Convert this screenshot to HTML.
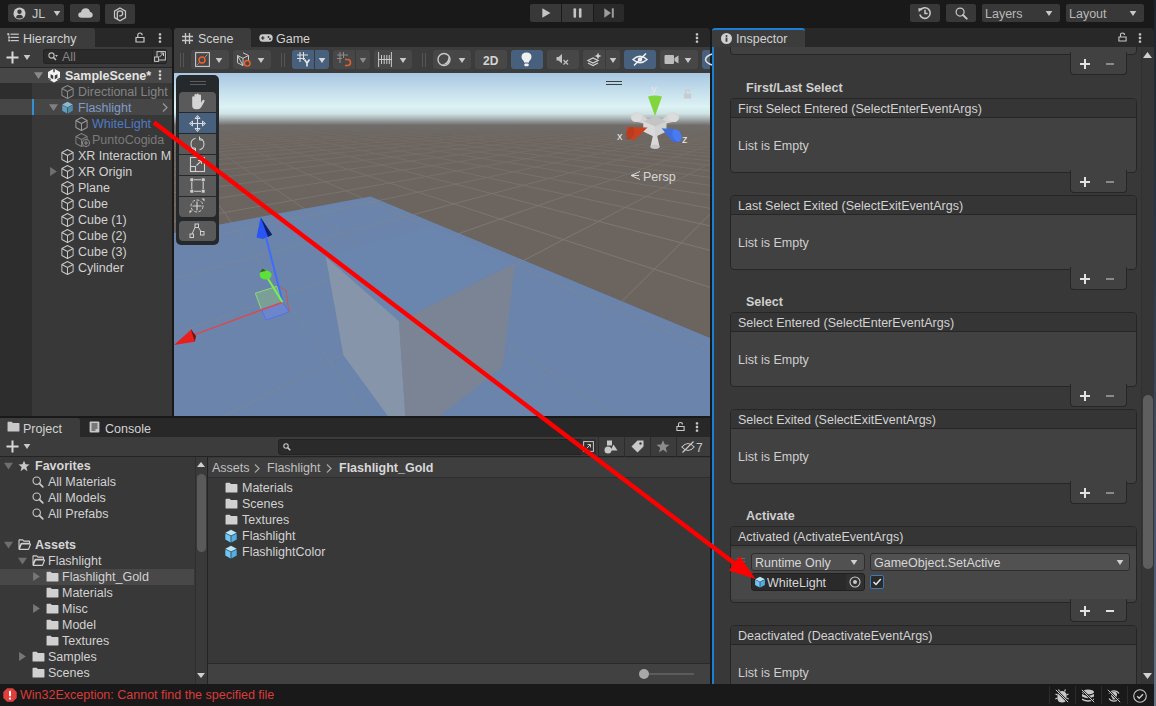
<!DOCTYPE html>
<html><head><meta charset="utf-8">
<style>
*{box-sizing:border-box;margin:0;padding:0}
html,body{width:1156px;height:706px;overflow:hidden;background:#191919;font-family:"Liberation Sans",sans-serif;font-size:12.5px;color:#d2d2d2}
.a{position:absolute}
.t{position:absolute;white-space:nowrap;line-height:18px}
.b{font-weight:bold}
.tb{background:#383838;border-radius:2px}
.tabbar{background:#282828}
.tab{background:#3c3c3c;border-radius:3px 3px 0 0}
.btn{position:absolute;background:#474747;border-radius:3px}
.blue{background:#46607d}
svg{position:absolute;overflow:visible}
</style></head><body>
<svg width="0" height="0" style="position:absolute">
<defs>
<symbol id="cube" viewBox="0.4 0.3 13.2 13.4" preserveAspectRatio="none"><path d="M7 0.8 L12.7 3.7 V10.3 L7 13.2 L1.3 10.3 V3.7 Z M1.3 3.7 L7 6.6 L12.7 3.7 M7 6.6 V13.2" fill="none" stroke="currentColor" stroke-width="1" stroke-linejoin="round"/></symbol>
<symbol id="pcube" viewBox="0 0 14 14"><path d="M7 0.8 L12.7 3.7 L7 6.6 L1.3 3.7 Z" fill="#b5e4fb"/><path d="M1.3 4.4 L6.6 7.1 V13.4 L1.3 10.6 Z" fill="#6ec6f2"/><path d="M12.7 4.4 L7.4 7.1 V13.4 L12.7 10.6 Z" fill="#4fb0e6"/></symbol>
<symbol id="folder" viewBox="0 0 14 12"><path d="M0.5 1.5 Q0.5 0.8 1.2 0.8 H5 L6.3 2.2 H12.8 Q13.5 2.2 13.5 2.9 V10.8 Q13.5 11.5 12.8 11.5 H1.2 Q0.5 11.5 0.5 10.8 Z" fill="currentColor"/></symbol>
<symbol id="ofolder" viewBox="0 0 14 12"><path d="M1 11 V1.5 Q1 1 1.5 1 H5 L6.3 2.3 H12 Q12.5 2.3 12.5 2.8 V4.6 H4 Q3.4 4.6 3.1 5.2 L1 11 Z M1.2 11.3 L3.6 5.5 H13.6 L11.4 11.3 Z" fill="none" stroke="currentColor" stroke-width="1.2" stroke-linejoin="round"/></symbol>
<symbol id="mag" viewBox="0 0 14 14"><circle cx="5.5" cy="5.5" r="4.3" fill="none" stroke="currentColor" stroke-width="1.3"/><path d="M8.6 8.6 L12.6 12.6" stroke="currentColor" stroke-width="2" stroke-linecap="round"/></symbol>
<symbol id="lock" viewBox="0 0 10 11"><path d="M1 5.5 H9 V10 H1 Z" fill="none" stroke="currentColor" stroke-width="1.2"/><path d="M2.8 5.5 V3.3 Q2.8 1 5 1 Q7.2 1 7.2 3.3" fill="none" stroke="currentColor" stroke-width="1.2"/></symbol>
<symbol id="kebab" viewBox="0 0 4 12"><rect x="0.8" y="1.2" width="2.4" height="2.4" rx="0.6" fill="currentColor"/><rect x="0.8" y="4.8" width="2.4" height="2.4" rx="0.6" fill="currentColor"/><rect x="0.8" y="8.4" width="2.4" height="2.4" rx="0.6" fill="currentColor"/></symbol>
<symbol id="tdown" viewBox="0 0 8 6"><path d="M0 0 H8 L4 6 Z" fill="currentColor"/></symbol>
<symbol id="tright" viewBox="0 0 6 8"><path d="M0 0 V8 L6 4 Z" fill="currentColor"/></symbol>
</defs></svg>

<!-- TOP TOOLBAR -->
<div class="a tb" style="left:8px;top:4px;width:56px;height:18px"></div>
<div class="a tb" style="left:70px;top:4px;width:30px;height:18px"></div>
<div class="a tb" style="left:105px;top:4px;width:30px;height:20px"></div>
<div class="a tb" style="left:530px;top:4px;width:31px;height:18px;border-radius:2px 0 0 2px"></div>
<div class="a tb" style="left:562px;top:4px;width:31px;height:18px;border-radius:0"></div>
<div class="a" style="left:594px;top:4px;width:30px;height:18px;background:#2a2a2a;border-radius:0 2px 2px 0"></div>
<div class="a tb" style="left:910px;top:4px;width:30px;height:18px"></div>
<div class="a tb" style="left:946px;top:4px;width:30px;height:18px"></div>
<div class="a tb" style="left:982px;top:4px;width:78px;height:18px"></div>
<div class="t" style="left:985px;top:5px;color:#b8b8b8">Layers</div>
<div class="a tb" style="left:1066px;top:4px;width:78px;height:18px"></div>
<div class="t" style="left:1069px;top:5px;color:#b8b8b8">Layout</div>
<!--TOP-->
<svg style="left:13px;top:7px" width="13" height="13" viewBox="0 0 13 13"><circle cx="6.5" cy="6.5" r="6" fill="#c8c8c8"/><circle cx="6.5" cy="4.8" r="2.2" fill="#383838"/><path d="M2.8 10.2 Q3.5 7.8 6.5 7.8 Q9.5 7.8 10.2 10.2 Q8.8 11.6 6.5 11.6 Q4.2 11.6 2.8 10.2Z" fill="#383838"/></svg>
<div class="t" style="left:32px;top:5px;color:#c8c8c8;font-size:12.5px">JL</div>
<svg style="left:53px;top:11px;color:#c8c8c8" width="8" height="5"><use href="#tdown"/></svg>
<svg style="left:78px;top:8px" width="15" height="10" viewBox="0 0 15 10"><path d="M3.5 9.8 Q0.3 9.8 0.3 7 Q0.3 4.5 3 4.3 Q3.8 0.3 7.8 0.3 Q11.5 0.3 12 4 Q14.7 4.3 14.7 7 Q14.7 9.8 11.8 9.8 Z" fill="#c8c8c8"/></svg>
<svg style="left:113px;top:7px" width="14" height="15" viewBox="0 0 14 15"><path d="M7 1 L12.5 4.2 V10.6 L7 13.8 L1.5 10.6 V4.2 Z" fill="none" stroke="#c8c8c8" stroke-width="1.2"/><path d="M4.3 12.3 V6 Q4.3 3.8 7 3.8 Q9.7 3.8 9.7 6.3 Q9.7 8.8 7 8.8 H6.2" fill="none" stroke="#c8c8c8" stroke-width="1.3"/></svg>
<svg style="left:542px;top:8px" width="9" height="10" viewBox="0 0 9 10"><path d="M0.3 0.3 L8.5 5 L0.3 9.7 Z" fill="#c4c4c4"/></svg>
<svg style="left:573px;top:8px" width="9" height="10" viewBox="0 0 9 10"><rect x="0.5" y="0.2" width="2.6" height="9.6" rx="1.1" fill="#c4c4c4"/><rect x="5.9" y="0.2" width="2.6" height="9.6" rx="1.1" fill="#c4c4c4"/></svg>
<svg style="left:604px;top:8px" width="10" height="10" viewBox="0 0 10 10"><path d="M0.3 0.3 L7 5 L0.3 9.7 Z" fill="#9c9c9c"/><rect x="7.8" y="0.3" width="2" height="9.4" fill="#9c9c9c"/></svg>
<svg style="left:918px;top:6px" width="14" height="14" viewBox="0 0 14 14"><path d="M2.4 4.2 A5.3 5.3 0 1 1 1.8 8.5" fill="none" stroke="#c8c8c8" stroke-width="1.6"/><path d="M0.3 2.2 L4.4 2.2 L0.8 6.2 Z" fill="#c8c8c8"/><path d="M7 3.8 V7.4 H9.6" fill="none" stroke="#c8c8c8" stroke-width="1.5"/></svg>
<svg style="left:955px;top:7px;color:#c8c8c8" width="13" height="13"><use href="#mag"/></svg>
<svg style="left:1045px;top:11px;color:#c8c8c8" width="8" height="5"><use href="#tdown"/></svg>
<svg style="left:1129px;top:11px;color:#c8c8c8" width="8" height="5"><use href="#tdown"/></svg>

<!--/TOP-->

<!-- HIERARCHY -->
<div class="a tabbar" style="left:0;top:28px;width:172px;height:19px;border-radius:0 4px 0 0"></div>
<div class="a tab" style="left:0;top:28px;width:95px;height:19px;border-radius:0 3px 0 0"></div>
<div class="t" style="left:23px;top:30px">Hierarchy</div>
<div class="a" style="left:0;top:47px;width:172px;height:20px;background:#3c3c3c"></div>
<div class="a" style="left:43px;top:49px;width:124px;height:15px;background:#2a2a2a;border-radius:3px"></div>
<div class="a" style="left:0;top:67px;width:172px;height:349px;background:#383838"></div>
<div class="a" style="left:0;top:83px;width:32px;height:333px;background:#2d2d2d"></div>
<div class="a" style="left:0;top:67px;width:172px;height:16px;background:#474747"></div>
<div class="a" style="left:0;top:99px;width:172px;height:16px;background:#464646"></div>
<div class="a" style="left:0;top:67px;width:172px;height:1px;background:#262626"></div>
<div class="a" style="left:0;top:0;width:172px;height:416px;overflow:hidden">
<!--HIER-->
<svg style="left:7px;top:33px" width="12" height="9" viewBox="0 0 12 9"><g fill="#c8c8c8"><rect x="3.5" y="0.6" width="8.3" height="1.2"/><rect x="3.5" y="3.8" width="8.3" height="1.2"/><rect x="3.5" y="7" width="8.3" height="1.2"/><rect x="0.3" y="0.2" width="2" height="2"/><rect x="1.5" y="2.5" width="0.9" height="6"/><rect x="1.5" y="3.8" width="1.5" height="1.2"/><rect x="1.5" y="7" width="1.5" height="1.2"/></g></svg>
<svg style="left:135px;top:32px;color:#c8c8c8" width="10" height="11"><use href="#lock"/></svg>
<svg style="left:158px;top:32px;color:#c8c8c8" width="4" height="12"><use href="#kebab"/></svg>
<svg style="left:6px;top:51px" width="13" height="13" viewBox="0 0 13 13"><path d="M6.5 0.5 V12.5 M0.5 6.5 H12.5" stroke="#d8d8d8" stroke-width="2"/></svg>
<svg style="left:23px;top:55px;color:#c8c8c8" width="8" height="5"><use href="#tdown"/></svg>
<div class="a" style="left:43px;top:49px;width:124px;height:15px;background:#2a2a2a;border:1px solid #232323;border-radius:3px"></div>
<div class="a" style="left:152px;top:49px;width:15px;height:15px;background:#303030;border-radius:0 3px 3px 0;border:1px solid #232323"></div>
<svg style="left:48px;top:52px" width="10" height="9" viewBox="0 0 10 9"><circle cx="3.5" cy="3.5" r="2.6" fill="none" stroke="#bdbdbd" stroke-width="1.1"/><path d="M5.4 5.4 L8 8" stroke="#bdbdbd" stroke-width="1.5"/><path d="M7 3 H10 L8.5 5 Z" fill="#bdbdbd"/></svg>
<div class="t" style="left:62px;top:48px;color:#858585;font-size:12.5px">All</div>
<svg style="left:154px;top:51px" width="12" height="11" viewBox="0 0 12 11"><rect x="3" y="0.6" width="8.4" height="8.4" fill="none" stroke="#c8c8c8" stroke-width="1"/><rect x="0.6" y="6" width="4" height="4.4" fill="#303030" stroke="#c8c8c8" stroke-width="1"/><path d="M5.5 6 L9.5 2 M6.5 2 H9.5 V5" fill="none" stroke="#c8c8c8" stroke-width="1"/></svg>

<svg style="left:34px;top:72px;color:#8a8a8a" width="9" height="7"><use href="#tdown"/></svg>
<svg style="left:47px;top:68px" width="14" height="15" viewBox="0 0 14 15"><path d="M7 0.5 L13 4 V11 L7 14.5 L1 11 V4 Z" fill="#f2f2f2"/><path d="M3.6 6.2 L6.2 7.6 V11.2 L3.6 9.8Z M10.4 6.2 L7.8 7.6 V11.2 L10.4 9.8Z" fill="#3a3a3a"/><path d="M6.3 0.3 H7.7 V4 L7 4.4 L6.3 4Z" fill="#3a3a3a"/><path d="M0.8 10.2 L3 11.4 L3.6 11 M13.2 10.2 L11 11.4 L10.4 11" stroke="#3a3a3a" stroke-width="1.1" fill="none"/></svg>
<div class="t b" style="left:65px;top:67px;color:#e4e4e4">SampleScene*</div>
<svg style="left:158px;top:69px;color:#d0d0d0" width="4" height="12"><use href="#kebab"/></svg>

<svg style="left:61px;top:85px;color:#8a8a8a" width="13" height="14"><use href="#cube"/></svg>
<div class="t" style="left:78px;top:83px;color:#848484">Directional Light</div>

<div class="a" style="left:32px;top:99px;width:2px;height:16px;background:#2f91d6"></div>
<svg style="left:49px;top:104px;color:#808080" width="9" height="7"><use href="#tdown"/></svg>
<svg style="left:61px;top:101px" width="13" height="13" viewBox="0 0 14 14"><path d="M7 0.8 L12.7 3.7 L7 6.6 L1.3 3.7 Z" fill="#8bb9d2"/><path d="M1.3 4.4 L6.6 7.1 V13.4 L1.3 10.6 Z" fill="#5f9dbd"/><path d="M12.7 4.4 L7.4 7.1 V13.4 L12.7 10.6 Z" fill="#4e8bab"/></svg>
<div class="t" style="left:78px;top:99px;color:#7f9cc6">Flashlight</div>
<svg style="left:162px;top:103px" width="6" height="9" viewBox="0 0 6 9"><path d="M1 0.5 L5 4.5 L1 8.5" fill="none" stroke="#9a9a9a" stroke-width="1.2"/></svg>

<svg style="left:75px;top:117px;color:#9a9a9a" width="13" height="14"><use href="#cube"/></svg>
<div class="t" style="left:92px;top:115px;color:#4f7bc4">WhiteLight</div>

<svg style="left:75px;top:133px;color:#7e7e7e" width="13" height="14"><use href="#cube"/></svg>
<svg style="left:82px;top:139px" width="8" height="8" viewBox="0 0 8 8"><circle cx="4" cy="4" r="3.6" fill="#383838" stroke="#8a8a8a" stroke-width="1"/><path d="M4 1.8 V6.2 M1.8 4 H6.2" stroke="#8a8a8a" stroke-width="1.2"/></svg>
<div class="t" style="left:92px;top:131px;color:#7a7a7a">PuntoCogida</div>

<svg style="left:61px;top:149px;color:#c8c8c8" width="13" height="14"><use href="#cube"/></svg>
<div class="t" style="left:78px;top:147px;color:#d2d2d2">XR Interaction M</div>

<svg style="left:50px;top:167px;color:#707070" width="7" height="9"><use href="#tright"/></svg>
<svg style="left:61px;top:165px;color:#c8c8c8" width="13" height="14"><use href="#cube"/></svg>
<div class="t" style="left:78px;top:163px;color:#d2d2d2">XR Origin</div>

<svg style="left:61px;top:181px;color:#c8c8c8" width="13" height="14"><use href="#cube"/></svg>
<div class="t" style="left:78px;top:179px;color:#d2d2d2">Plane</div>
<svg style="left:61px;top:197px;color:#c8c8c8" width="13" height="14"><use href="#cube"/></svg>
<div class="t" style="left:78px;top:195px;color:#d2d2d2">Cube</div>
<svg style="left:61px;top:213px;color:#c8c8c8" width="13" height="14"><use href="#cube"/></svg>
<div class="t" style="left:78px;top:211px;color:#d2d2d2">Cube (1)</div>
<svg style="left:61px;top:229px;color:#c8c8c8" width="13" height="14"><use href="#cube"/></svg>
<div class="t" style="left:78px;top:227px;color:#d2d2d2">Cube (2)</div>
<svg style="left:61px;top:245px;color:#c8c8c8" width="13" height="14"><use href="#cube"/></svg>
<div class="t" style="left:78px;top:243px;color:#d2d2d2">Cube (3)</div>
<svg style="left:61px;top:261px;color:#c8c8c8" width="13" height="14"><use href="#cube"/></svg>
<div class="t" style="left:78px;top:259px;color:#d2d2d2">Cylinder</div>

<!--/HIER-->
</div>

<!-- SCENE -->
<div class="a tabbar" style="left:174px;top:28px;width:536px;height:19px;border-radius:4px 4px 0 0"></div>
<div class="a tab" style="left:174px;top:28px;width:77px;height:19px"></div>
<div class="t" style="left:198px;top:30px">Scene</div>
<div class="t" style="left:276px;top:30px">Game</div>
<div class="a" style="left:174px;top:47px;width:536px;height:26px;background:#3c3c3c"></div>
<!--STB-->
<svg style="left:182px;top:33px" width="11" height="11" viewBox="0 0 11 11"><path d="M3.5 0 V11 M7.5 0 V11 M0 3.5 H11 M0 7.5 H11" stroke="#c8c8c8" stroke-width="1.3"/></svg>
<svg style="left:259px;top:34px" width="14" height="8" viewBox="0 0 14 8"><path d="M3.5 0.3 H10.5 Q13.7 0.3 13.7 4 Q13.7 7.7 10.5 7.7 H3.5 Q0.3 7.7 0.3 4 Q0.3 0.3 3.5 0.3Z" fill="#c8c8c8"/><path d="M3.8 2.3 V5.7 M2.1 4 H5.5" stroke="#282828" stroke-width="1.2"/><circle cx="9.5" cy="3" r="0.9" fill="#282828"/><circle cx="11" cy="5" r="0.9" fill="#282828"/></svg>
<svg style="left:695px;top:32px;color:#c8c8c8" width="4" height="12"><use href="#kebab"/></svg>
<div class="a" style="left:180px;top:53px;width:1px;height:14px;background:#555"></div>
<div class="a" style="left:183px;top:53px;width:1px;height:14px;background:#555"></div>
<div class="btn" style="left:191px;top:50px;width:38px;height:19px"></div>
<svg style="left:195px;top:52px" width="15" height="15" viewBox="0 0 15 15"><rect x="0.6" y="0.6" width="13.8" height="13.8" fill="none" stroke="#c8c8c8" stroke-width="1.1"/><path d="M2.5 12.5 L12.5 2.5" stroke="#c8c8c8" stroke-width="0.9" stroke-dasharray="1.5 1"/><circle cx="7" cy="8" r="3" fill="#474747" stroke="#f0602a" stroke-width="1.4"/></svg>
<svg style="left:215px;top:58px;color:#c8c8c8" width="8" height="5"><use href="#tdown"/></svg>
<div class="btn" style="left:233px;top:50px;width:38px;height:19px"></div>
<svg style="left:236px;top:52px" width="15" height="15" viewBox="0 0 15 15"><path d="M7 0.8 L12.5 3.5 V9 M7 13.5 L1.5 10.8 V3.5 Z M1.5 3.5 L7 6.3 L12.5 3.5 M7 6.3 V13.5" fill="none" stroke="#c8c8c8" stroke-width="1"/><circle cx="11.3" cy="11.3" r="2.8" fill="#474747" stroke="#f0602a" stroke-width="1.4"/></svg>
<svg style="left:257px;top:58px;color:#c8c8c8" width="8" height="5"><use href="#tdown"/></svg>
<div class="a" style="left:281px;top:53px;width:1px;height:14px;background:#555"></div>
<div class="a" style="left:284px;top:53px;width:1px;height:14px;background:#555"></div>
<div class="btn blue" style="left:292px;top:50px;width:37px;height:19px"></div>
<div class="a" style="left:314px;top:50px;width:1px;height:19px;background:#3a3a3a"></div>
<svg style="left:297px;top:52px" width="14" height="15" viewBox="0 0 14 15"><path d="M3 0 V10 M6.5 0 V8 M0 3 H11 M0 6.5 H8" stroke="#e0e0e0" stroke-width="1.1"/><path d="M7.5 7.5 L10 11 L12.5 7.5 M10 11 V14.5" fill="none" stroke="#e8e8e8" stroke-width="1.6"/></svg>
<svg style="left:318px;top:58px;color:#d8d8d8" width="8" height="5"><use href="#tdown"/></svg>
<div class="btn" style="left:333px;top:50px;width:37px;height:19px"></div>
<div class="a" style="left:355px;top:50px;width:1px;height:19px;background:#3a3a3a"></div>
<svg style="left:337px;top:52px" width="15" height="15" viewBox="0 0 15 15"><path d="M3 0 V11 M6.5 0 V6 M0 3 H11 M0 6.5 H5" stroke="#8c8c8c" stroke-width="1.1"/><path d="M8 7.5 H10.5 Q13.5 7.5 13.5 10.5 Q13.5 13.5 10.5 13.5 H8" fill="none" stroke="#e06030" stroke-width="1.6"/></svg>
<svg style="left:359px;top:58px;color:#8a8a8a" width="8" height="5"><use href="#tdown"/></svg>
<div class="btn" style="left:374px;top:50px;width:38px;height:19px"></div>
<svg style="left:378px;top:52px" width="14" height="15" viewBox="0 0 14 15"><path d="M0.6 0 V15 M13.4 0 V15 M3.5 3 V12 M6.2 3 V12 M8.8 3 V12 M11.3 3 V12 M0 7.5 H14" stroke="#c8c8c8" stroke-width="1"/></svg>
<svg style="left:399px;top:58px;color:#c8c8c8" width="8" height="5"><use href="#tdown"/></svg>
<div class="a" style="left:422px;top:53px;width:1px;height:14px;background:#555"></div>
<div class="a" style="left:425px;top:53px;width:1px;height:14px;background:#555"></div>
<div class="btn" style="left:433px;top:50px;width:38px;height:19px"></div>
<svg style="left:437px;top:52px" width="15" height="15" viewBox="0 0 15 15"><circle cx="7" cy="7.5" r="6" fill="none" stroke="#c8c8c8" stroke-width="1.4"/><path d="M4.5 12.5 Q11 12 11.5 4.5 Q13.5 8 11.5 11 Q9 13.5 4.5 12.5Z" fill="#c8c8c8"/></svg>
<svg style="left:458px;top:58px;color:#c8c8c8" width="8" height="5"><use href="#tdown"/></svg>
<div class="btn" style="left:475px;top:50px;width:32px;height:19px"></div>
<div class="t b" style="left:483px;top:52px;color:#d4d4d4;font-size:12px">2D</div>
<div class="btn blue" style="left:511px;top:50px;width:32px;height:19px"></div>
<svg style="left:521px;top:52px" width="11" height="15" viewBox="0 0 11 15"><path d="M5.5 0.5 Q10.5 0.5 10.5 5 Q10.5 7.5 8 9.5 V10.5 H3 V9.5 Q0.5 7.5 0.5 5 Q0.5 0.5 5.5 0.5Z" fill="#f0f0f0"/><rect x="3.3" y="11.5" width="4.4" height="2.8" rx="1" fill="#f0f0f0"/></svg>
<div class="btn" style="left:547px;top:50px;width:32px;height:19px"></div>
<svg style="left:556px;top:53px" width="14" height="13" viewBox="0 0 14 13"><path d="M0.5 4 H2.5 L6 1 V10.5 L2.5 7.5 H0.5Z" fill="#c0c0c0"/><path d="M7.5 7 L12 11.5 M12 7 L7.5 11.5" stroke="#c0c0c0" stroke-width="1.3"/></svg>
<div class="btn" style="left:583px;top:50px;width:37px;height:19px"></div>
<div class="a" style="left:605px;top:50px;width:1px;height:19px;background:#3a3a3a"></div>
<svg style="left:587px;top:52px" width="15" height="15" viewBox="0 0 15 15"><path d="M1 8.5 L6 6 L11 8.5 L6 11Z M1 11 L6 13.5 L11 11" fill="none" stroke="#d0d0d0" stroke-width="1.3"/><path d="M11 0.5 L12 3 L14.5 4 L12 5 L11 7.5 L10 5 L7.5 4 L10 3Z" fill="#d0d0d0"/></svg>
<svg style="left:609px;top:58px;color:#c8c8c8" width="8" height="5"><use href="#tdown"/></svg>
<div class="btn blue" style="left:624px;top:50px;width:32px;height:19px"></div>
<svg style="left:632px;top:53px" width="16" height="13" viewBox="0 0 16 13"><path d="M1 6.5 Q8 0 15 6.5 Q8 13 1 6.5Z" fill="none" stroke="#f0f0f0" stroke-width="1.5"/><circle cx="8" cy="6.5" r="2.2" fill="#f0f0f0"/><path d="M2 12.5 L14 0.5" stroke="#f0f0f0" stroke-width="1.6"/></svg>
<div class="btn" style="left:660px;top:50px;width:38px;height:19px"></div>
<svg style="left:664px;top:54px" width="15" height="11" viewBox="0 0 15 11"><rect x="0.5" y="1" width="9.5" height="9" rx="1" fill="#bdbdbd"/><path d="M10.5 4 L14.5 1.5 V9.5 L10.5 7Z" fill="#bdbdbd"/></svg>
<svg style="left:684px;top:58px;color:#c8c8c8" width="8" height="5"><use href="#tdown"/></svg>
<div class="btn blue" style="left:702px;top:50px;width:8px;height:19px;border-radius:3px 0 0 3px"></div>
<svg style="left:704px;top:53px" width="8" height="13" viewBox="0 0 8 13"><path d="M8 1 Q2 3 1.5 6.5 Q2 10 8 12" fill="none" stroke="#e0e0e0" stroke-width="1.6"/></svg>

<!--/STB-->
<svg style="left:174px;top:73px;overflow:hidden" width="536" height="343" viewBox="174 73 536 343">
<defs>
<linearGradient id="sky" x1="0" y1="73" x2="0" y2="135" gradientUnits="userSpaceOnUse">
<stop offset="0" stop-color="#a8c7e2"/><stop offset="0.54" stop-color="#dcf2f4"/><stop offset="0.653" stop-color="#d0e4e6"/><stop offset="0.734" stop-color="#aab5b7"/><stop offset="0.79" stop-color="#8c9090"/><stop offset="0.847" stop-color="#6d6a68"/><stop offset="1" stop-color="#6b645f"/>
</linearGradient>
<linearGradient id="gf" x1="0" y1="118" x2="0" y2="230" gradientUnits="userSpaceOnUse"><stop offset="0" stop-color="#000"/><stop offset="0.2" stop-color="#555"/><stop offset="1" stop-color="#fff"/></linearGradient>
<mask id="gm" maskUnits="userSpaceOnUse" x="174" y="73" width="537" height="343"><rect x="174" y="73" width="537" height="343" fill="url(#gf)"/></mask>
<clipPath id="pc"><polygon points="370.7,196.4 711,338.5 711,416 174,416 174,233"/></clipPath>
</defs>
<rect x="174" y="73" width="537" height="343" fill="url(#sky)"/>
<g stroke="#8b8681" stroke-width="1" mask="url(#gm)" fill="none" opacity="0.6">
<!--GRID-->
<line x1="-2594.4" y1="154.8" x2="463.0" y2="111.5"/>
<line x1="-2834.8" y1="159.2" x2="465.6" y2="111.6"/>
<line x1="-3121.3" y1="164.5" x2="468.4" y2="111.6"/>
<line x1="-3468.7" y1="170.9" x2="471.1" y2="111.7"/>
<line x1="-3898.7" y1="178.9" x2="473.9" y2="111.8"/>
<line x1="-4444.8" y1="188.9" x2="476.8" y2="111.8"/>
<line x1="-5161.2" y1="202.2" x2="479.7" y2="111.9"/>
<line x1="-6142.6" y1="220.3" x2="482.7" y2="112.0"/>
<line x1="-7568.9" y1="246.6" x2="485.7" y2="112.1"/>
<line x1="-9831.6" y1="288.4" x2="488.8" y2="112.1"/>
<line x1="-13972.0" y1="364.8" x2="491.9" y2="112.2"/>
<line x1="-23983.7" y1="549.7" x2="495.1" y2="112.3"/>
<line x1="-82792.4" y1="1635.4" x2="498.3" y2="112.3"/>
<line x1="-295107.3" y1="5646.4" x2="501.6" y2="112.4"/>
<line x1="-289203.1" y1="5667.0" x2="505.0" y2="112.5"/>
<line x1="-283299.0" y1="5687.5" x2="508.4" y2="112.6"/>
<line x1="-277394.8" y1="5708.0" x2="511.9" y2="112.7"/>
<line x1="-271490.7" y1="5728.6" x2="515.5" y2="112.7"/>
<line x1="-265586.5" y1="5749.1" x2="519.1" y2="112.8"/>
<line x1="-259682.4" y1="5769.6" x2="522.8" y2="112.9"/>
<line x1="-253778.2" y1="5790.2" x2="526.6" y2="113.0"/>
<line x1="-247874.1" y1="5810.7" x2="530.5" y2="113.1"/>
<line x1="-241969.9" y1="5831.2" x2="534.4" y2="113.2"/>
<line x1="-236065.7" y1="5851.7" x2="538.5" y2="113.3"/>
<line x1="-230161.6" y1="5872.3" x2="542.6" y2="113.4"/>
<line x1="-224257.4" y1="5892.8" x2="546.8" y2="113.5"/>
<line x1="-218353.3" y1="5913.3" x2="551.1" y2="113.6"/>
<line x1="-212449.1" y1="5933.9" x2="555.5" y2="113.7"/>
<line x1="-206545.0" y1="5954.4" x2="559.9" y2="113.8"/>
<line x1="-200640.8" y1="5974.9" x2="564.5" y2="113.9"/>
<line x1="-194736.7" y1="5995.5" x2="569.2" y2="114.0"/>
<line x1="-188832.5" y1="6016.0" x2="574.0" y2="114.1"/>
<line x1="-182928.3" y1="6036.5" x2="578.9" y2="114.2"/>
<line x1="-177024.2" y1="6057.0" x2="583.9" y2="114.4"/>
<line x1="-171120.0" y1="6077.6" x2="589.0" y2="114.5"/>
<line x1="-165215.9" y1="6098.1" x2="594.3" y2="114.6"/>
<line x1="-159311.7" y1="6118.6" x2="599.7" y2="114.7"/>
<line x1="-153407.6" y1="6139.2" x2="605.2" y2="114.8"/>
<line x1="-147503.4" y1="6159.7" x2="610.8" y2="115.0"/>
<line x1="-141599.3" y1="6180.2" x2="616.6" y2="115.1"/>
<line x1="-135695.1" y1="6200.8" x2="622.6" y2="115.3"/>
<line x1="-129791.0" y1="6221.3" x2="628.6" y2="115.4"/>
<line x1="-123886.8" y1="6241.8" x2="634.9" y2="115.5"/>
<line x1="-117982.6" y1="6262.3" x2="641.3" y2="115.7"/>
<line x1="-112078.5" y1="6282.9" x2="647.9" y2="115.8"/>
<line x1="-106174.3" y1="6303.4" x2="654.6" y2="116.0"/>
<line x1="-100270.2" y1="6323.9" x2="661.6" y2="116.2"/>
<line x1="-94366.0" y1="6344.5" x2="668.7" y2="116.3"/>
<line x1="-88461.9" y1="6365.0" x2="676.1" y2="116.5"/>
<line x1="-82557.7" y1="6385.5" x2="683.6" y2="116.7"/>
<line x1="-76653.6" y1="6406.1" x2="691.4" y2="116.9"/>
<line x1="-70749.4" y1="6426.6" x2="699.4" y2="117.1"/>
<line x1="-64845.2" y1="6447.1" x2="707.6" y2="117.2"/>
<line x1="-58941.1" y1="6467.6" x2="716.1" y2="117.4"/>
<line x1="-53036.9" y1="6488.2" x2="724.8" y2="117.6"/>
<line x1="-47132.8" y1="6508.7" x2="733.9" y2="117.9"/>
<line x1="-41228.6" y1="6529.2" x2="743.2" y2="118.1"/>
<line x1="-35324.5" y1="6549.8" x2="752.8" y2="118.3"/>
<line x1="-29420.3" y1="6570.3" x2="762.7" y2="118.5"/>
<line x1="-23516.2" y1="6590.8" x2="773.0" y2="118.8"/>
<line x1="-17612.0" y1="6611.4" x2="783.6" y2="119.0"/>
<line x1="-11707.8" y1="6631.9" x2="794.5" y2="119.3"/>
<line x1="-5803.7" y1="6652.4" x2="805.9" y2="119.5"/>
<line x1="100.5" y1="6672.9" x2="817.6" y2="119.8"/>
<line x1="6004.6" y1="6693.5" x2="829.8" y2="120.1"/>
<line x1="11908.8" y1="6714.0" x2="842.5" y2="120.4"/>
<line x1="17812.9" y1="6734.5" x2="855.6" y2="120.7"/>
<line x1="23717.1" y1="6755.1" x2="869.2" y2="121.0"/>
<line x1="29621.2" y1="6775.6" x2="883.3" y2="121.4"/>
<line x1="35525.4" y1="6796.1" x2="898.1" y2="121.7"/>
<line x1="41429.6" y1="6816.7" x2="913.4" y2="122.1"/>
<line x1="47333.7" y1="6837.2" x2="929.3" y2="122.4"/>
<line x1="53237.9" y1="6857.7" x2="946.0" y2="122.8"/>
<line x1="59142.0" y1="6878.2" x2="963.3" y2="123.2"/>
<line x1="65046.2" y1="6898.8" x2="981.5" y2="123.7"/>
<line x1="70950.3" y1="6919.3" x2="1000.4" y2="124.1"/>
<line x1="76854.5" y1="6939.8" x2="1020.3" y2="124.6"/>
<line x1="82758.6" y1="6960.4" x2="1041.1" y2="125.1"/>
<line x1="88662.8" y1="6980.9" x2="1062.9" y2="125.6"/>
<line x1="94567.0" y1="7001.4" x2="1085.8" y2="126.1"/>
<line x1="100471.1" y1="7022.0" x2="1109.9" y2="126.7"/>
<line x1="106375.3" y1="7042.5" x2="1135.2" y2="127.3"/>
<line x1="112279.4" y1="7063.0" x2="1161.9" y2="127.9"/>
<line x1="118183.6" y1="7083.5" x2="1190.1" y2="128.5"/>
<line x1="124087.7" y1="7104.1" x2="1219.9" y2="129.2"/>
<line x1="129991.9" y1="7124.6" x2="1251.5" y2="130.0"/>
<line x1="135896.0" y1="7145.1" x2="1285.0" y2="130.8"/>
<line x1="141800.2" y1="7165.7" x2="1320.6" y2="131.6"/>
<line x1="147704.4" y1="7186.2" x2="1358.4" y2="132.5"/>
<line x1="153608.5" y1="7206.7" x2="1398.8" y2="133.4"/>
<line x1="159512.7" y1="7227.3" x2="1442.0" y2="134.4"/>
<line x1="165416.8" y1="7247.8" x2="1488.3" y2="135.5"/>
<line x1="171321.0" y1="7268.3" x2="1538.1" y2="136.7"/>
<line x1="177225.1" y1="7288.8" x2="1591.6" y2="137.9"/>
<line x1="183129.3" y1="7309.4" x2="1649.5" y2="139.3"/>
<line x1="189033.4" y1="7329.9" x2="1712.1" y2="140.8"/>
<line x1="194937.6" y1="7350.4" x2="1780.3" y2="142.4"/>
<line x1="200841.8" y1="7371.0" x2="1854.6" y2="144.1"/>
<line x1="206745.9" y1="7391.5" x2="1936.0" y2="146.0"/>
<line x1="212650.1" y1="7412.0" x2="2025.6" y2="148.1"/>
<line x1="218554.2" y1="7432.6" x2="2124.7" y2="150.4"/>
<line x1="224458.4" y1="7453.1" x2="2234.8" y2="153.0"/>
<line x1="230362.5" y1="7473.6" x2="2357.8" y2="155.9"/>
<line x1="236266.7" y1="7494.1" x2="2496.3" y2="159.1"/>
<line x1="242170.8" y1="7514.7" x2="2653.4" y2="162.8"/>
<line x1="248075.0" y1="7535.2" x2="2832.9" y2="167.0"/>
<line x1="253979.1" y1="7555.7" x2="3040.1" y2="171.8"/>
<line x1="259883.3" y1="7576.3" x2="3282.0" y2="177.5"/>
<line x1="265787.5" y1="7596.8" x2="3568.0" y2="184.2"/>
<line x1="271691.6" y1="7617.3" x2="3911.5" y2="192.2"/>
<line x1="277595.8" y1="7637.9" x2="4331.7" y2="202.1"/>
<line x1="283499.9" y1="7658.4" x2="4857.5" y2="214.4"/>
<line x1="289404.1" y1="7678.9" x2="5534.5" y2="230.2"/>
<line x1="295308.2" y1="7699.4" x2="6438.8" y2="251.4"/>
<line x1="301212.4" y1="7720.0" x2="7707.9" y2="281.1"/>
<line x1="307116.5" y1="7740.5" x2="9618.6" y2="325.8"/>
<line x1="313020.7" y1="7761.0" x2="12821.7" y2="400.8"/>
<line x1="318924.9" y1="7781.6" x2="19298.8" y2="552.3"/>
<line x1="324829.0" y1="7802.1" x2="39316.3" y2="1020.8"/>
<line x1="-2594.4" y1="154.8" x2="-299259.9" y2="5632.0"/>
<line x1="-2366.5" y1="151.6" x2="-294017.6" y2="5650.2"/>
<line x1="-2167.1" y1="148.7" x2="-288775.4" y2="5668.5"/>
<line x1="-1991.2" y1="146.2" x2="-283533.2" y2="5686.7"/>
<line x1="-1834.9" y1="144.0" x2="-278291.0" y2="5704.9"/>
<line x1="-1695.1" y1="142.1" x2="-273048.8" y2="5723.2"/>
<line x1="-1569.2" y1="140.3" x2="-267806.6" y2="5741.4"/>
<line x1="-1455.4" y1="138.7" x2="-262564.3" y2="5759.6"/>
<line x1="-1351.9" y1="137.2" x2="-257322.1" y2="5777.8"/>
<line x1="-1257.4" y1="135.9" x2="-252079.9" y2="5796.1"/>
<line x1="-1170.8" y1="134.6" x2="-246837.7" y2="5814.3"/>
<line x1="-1091.1" y1="133.5" x2="-241595.5" y2="5832.5"/>
<line x1="-1017.6" y1="132.5" x2="-236353.2" y2="5850.7"/>
<line x1="-949.5" y1="131.5" x2="-231111.0" y2="5869.0"/>
<line x1="-886.3" y1="130.6" x2="-225868.8" y2="5887.2"/>
<line x1="-827.4" y1="129.8" x2="-220626.6" y2="5905.4"/>
<line x1="-772.5" y1="129.0" x2="-215384.4" y2="5923.7"/>
<line x1="-721.1" y1="128.3" x2="-210142.1" y2="5941.9"/>
<line x1="-673.0" y1="127.6" x2="-204899.9" y2="5960.1"/>
<line x1="-627.7" y1="127.0" x2="-199657.7" y2="5978.3"/>
<line x1="-585.1" y1="126.4" x2="-194415.5" y2="5996.6"/>
<line x1="-545.0" y1="125.8" x2="-189173.3" y2="6014.8"/>
<line x1="-507.1" y1="125.2" x2="-183931.1" y2="6033.0"/>
<line x1="-471.2" y1="124.7" x2="-178688.8" y2="6051.3"/>
<line x1="-437.2" y1="124.3" x2="-173446.6" y2="6069.5"/>
<line x1="-405.0" y1="123.8" x2="-168204.4" y2="6087.7"/>
<line x1="-374.4" y1="123.4" x2="-162962.2" y2="6105.9"/>
<line x1="-345.3" y1="123.0" x2="-157720.0" y2="6124.2"/>
<line x1="-317.5" y1="122.6" x2="-152477.7" y2="6142.4"/>
<line x1="-291.1" y1="122.2" x2="-147235.5" y2="6160.6"/>
<line x1="-265.8" y1="121.8" x2="-141993.3" y2="6178.9"/>
<line x1="-241.7" y1="121.5" x2="-136751.1" y2="6197.1"/>
<line x1="-218.6" y1="121.2" x2="-131508.9" y2="6215.3"/>
<line x1="-196.5" y1="120.9" x2="-126266.6" y2="6233.5"/>
<line x1="-175.4" y1="120.6" x2="-121024.4" y2="6251.8"/>
<line x1="-155.1" y1="120.3" x2="-115782.2" y2="6270.0"/>
<line x1="-135.6" y1="120.0" x2="-110540.0" y2="6288.2"/>
<line x1="-116.9" y1="119.7" x2="-105297.8" y2="6306.5"/>
<line x1="-98.8" y1="119.5" x2="-100055.5" y2="6324.7"/>
<line x1="-81.5" y1="119.2" x2="-94813.3" y2="6342.9"/>
<line x1="-64.8" y1="119.0" x2="-89571.1" y2="6361.1"/>
<line x1="-48.8" y1="118.8" x2="-84328.9" y2="6379.4"/>
<line x1="-33.3" y1="118.5" x2="-79086.7" y2="6397.6"/>
<line x1="-18.3" y1="118.3" x2="-73844.5" y2="6415.8"/>
<line x1="-3.9" y1="118.1" x2="-68602.2" y2="6434.1"/>
<line x1="10.1" y1="117.9" x2="-63360.0" y2="6452.3"/>
<line x1="23.6" y1="117.7" x2="-58117.8" y2="6470.5"/>
<line x1="36.6" y1="117.6" x2="-52875.6" y2="6488.7"/>
<line x1="49.3" y1="117.4" x2="-47633.4" y2="6507.0"/>
<line x1="61.5" y1="117.2" x2="-42391.1" y2="6525.2"/>
<line x1="73.3" y1="117.0" x2="-37148.9" y2="6543.4"/>
<line x1="84.8" y1="116.9" x2="-31906.7" y2="6561.7"/>
<line x1="95.9" y1="116.7" x2="-26664.5" y2="6579.9"/>
<line x1="106.7" y1="116.6" x2="-21422.3" y2="6598.1"/>
<line x1="117.2" y1="116.4" x2="-16180.0" y2="6616.3"/>
<line x1="127.4" y1="116.3" x2="-10937.8" y2="6634.6"/>
<line x1="137.3" y1="116.1" x2="-5695.6" y2="6652.8"/>
<line x1="146.9" y1="116.0" x2="-453.4" y2="6671.0"/>
<line x1="156.2" y1="115.9" x2="4788.8" y2="6689.3"/>
<line x1="165.3" y1="115.7" x2="10031.1" y2="6707.5"/>
<line x1="174.1" y1="115.6" x2="15273.3" y2="6725.7"/>
<line x1="182.7" y1="115.5" x2="20515.5" y2="6743.9"/>
<line x1="191.1" y1="115.4" x2="25757.7" y2="6762.2"/>
<line x1="199.3" y1="115.3" x2="30999.9" y2="6780.4"/>
<line x1="207.2" y1="115.1" x2="36242.1" y2="6798.6"/>
<line x1="215.0" y1="115.0" x2="41484.4" y2="6816.8"/>
<line x1="222.5" y1="114.9" x2="46726.6" y2="6835.1"/>
<line x1="229.9" y1="114.8" x2="51968.8" y2="6853.3"/>
<line x1="237.1" y1="114.7" x2="57211.0" y2="6871.5"/>
<line x1="244.1" y1="114.6" x2="62453.2" y2="6889.8"/>
<line x1="250.9" y1="114.5" x2="67695.5" y2="6908.0"/>
<line x1="257.6" y1="114.4" x2="72937.7" y2="6926.2"/>
<line x1="264.2" y1="114.3" x2="78179.9" y2="6944.4"/>
<line x1="270.5" y1="114.2" x2="83422.1" y2="6962.7"/>
<line x1="276.8" y1="114.2" x2="88664.3" y2="6980.9"/>
<line x1="282.9" y1="114.1" x2="93906.6" y2="6999.1"/>
<line x1="288.8" y1="114.0" x2="99148.8" y2="7017.4"/>
<line x1="294.7" y1="113.9" x2="104391.0" y2="7035.6"/>
<line x1="300.4" y1="113.8" x2="109633.2" y2="7053.8"/>
<line x1="305.9" y1="113.7" x2="114875.4" y2="7072.0"/>
<line x1="311.4" y1="113.7" x2="120117.6" y2="7090.3"/>
<line x1="316.7" y1="113.6" x2="125359.9" y2="7108.5"/>
<line x1="322.0" y1="113.5" x2="130602.1" y2="7126.7"/>
<line x1="327.1" y1="113.4" x2="135844.3" y2="7145.0"/>
<line x1="332.1" y1="113.4" x2="141086.5" y2="7163.2"/>
<line x1="337.0" y1="113.3" x2="146328.7" y2="7181.4"/>
<line x1="341.9" y1="113.2" x2="151571.0" y2="7199.6"/>
<line x1="346.6" y1="113.2" x2="156813.2" y2="7217.9"/>
<line x1="351.2" y1="113.1" x2="162055.4" y2="7236.1"/>
<line x1="355.8" y1="113.0" x2="167297.6" y2="7254.3"/>
<line x1="360.2" y1="113.0" x2="172539.8" y2="7272.6"/>
<line x1="364.6" y1="112.9" x2="177782.1" y2="7290.8"/>
<line x1="368.9" y1="112.9" x2="183024.3" y2="7309.0"/>
<line x1="373.1" y1="112.8" x2="188266.5" y2="7327.2"/>
<line x1="377.2" y1="112.7" x2="193508.7" y2="7345.5"/>
<line x1="381.3" y1="112.7" x2="198750.9" y2="7363.7"/>
<line x1="385.3" y1="112.6" x2="203993.2" y2="7381.9"/>
<line x1="389.2" y1="112.6" x2="209235.4" y2="7400.2"/>
<line x1="393.0" y1="112.5" x2="214477.6" y2="7418.4"/>
<line x1="396.8" y1="112.5" x2="219719.8" y2="7436.6"/>
<line x1="400.5" y1="112.4" x2="224962.0" y2="7454.8"/>
<line x1="404.1" y1="112.4" x2="230204.2" y2="7473.1"/>
<line x1="407.7" y1="112.3" x2="235446.5" y2="7491.3"/>
<line x1="411.2" y1="112.3" x2="240688.7" y2="7509.5"/>
<line x1="414.7" y1="112.2" x2="245930.9" y2="7527.8"/>
<line x1="418.1" y1="112.2" x2="251173.1" y2="7546.0"/>
<line x1="421.4" y1="112.1" x2="256415.3" y2="7564.2"/>
<line x1="424.7" y1="112.1" x2="261657.6" y2="7582.4"/>
<line x1="427.9" y1="112.0" x2="266899.8" y2="7600.7"/>
<line x1="431.1" y1="112.0" x2="272142.0" y2="7618.9"/>
<line x1="434.2" y1="111.9" x2="277384.2" y2="7637.1"/>
<line x1="437.3" y1="111.9" x2="282626.4" y2="7655.4"/>
<line x1="440.4" y1="111.8" x2="287868.7" y2="7673.6"/>
<line x1="443.3" y1="111.8" x2="293110.9" y2="7691.8"/>
<line x1="446.3" y1="111.8" x2="298353.1" y2="7710.0"/>
<line x1="449.2" y1="111.7" x2="303595.3" y2="7728.3"/>
<line x1="452.0" y1="111.7" x2="308837.5" y2="7746.5"/>
<line x1="454.8" y1="111.6" x2="314079.7" y2="7764.7"/>
<line x1="457.6" y1="111.6" x2="319322.0" y2="7782.9"/>
<line x1="460.3" y1="111.6" x2="324564.2" y2="7801.2"/>
<line x1="463.0" y1="111.5" x2="329806.4" y2="7819.4"/>
<!--/GRID-->
</g>
<polygon points="370.7,196.4 711,338.5 711,416 174,416 174,233" fill="#6a84ac"/>
<!--SCENEOBJ-->
<g clip-path="url(#pc)" stroke="#7d8796" stroke-width="1" fill="none" opacity="0.8">
<line x1="-2594.4" y1="154.8" x2="463.0" y2="111.5"/>
<line x1="-2834.8" y1="159.2" x2="465.6" y2="111.6"/>
<line x1="-3121.3" y1="164.5" x2="468.4" y2="111.6"/>
<line x1="-3468.7" y1="170.9" x2="471.1" y2="111.7"/>
<line x1="-3898.7" y1="178.9" x2="473.9" y2="111.8"/>
<line x1="-4444.8" y1="188.9" x2="476.8" y2="111.8"/>
<line x1="-5161.2" y1="202.2" x2="479.7" y2="111.9"/>
<line x1="-6142.6" y1="220.3" x2="482.7" y2="112.0"/>
<line x1="-7568.9" y1="246.6" x2="485.7" y2="112.1"/>
<line x1="-9831.6" y1="288.4" x2="488.8" y2="112.1"/>
<line x1="-13972.0" y1="364.8" x2="491.9" y2="112.2"/>
<line x1="-23983.7" y1="549.7" x2="495.1" y2="112.3"/>
<line x1="-82792.4" y1="1635.4" x2="498.3" y2="112.3"/>
<line x1="-295107.3" y1="5646.4" x2="501.6" y2="112.4"/>
<line x1="-289203.1" y1="5667.0" x2="505.0" y2="112.5"/>
<line x1="-283299.0" y1="5687.5" x2="508.4" y2="112.6"/>
<line x1="-277394.8" y1="5708.0" x2="511.9" y2="112.7"/>
<line x1="-271490.7" y1="5728.6" x2="515.5" y2="112.7"/>
<line x1="-265586.5" y1="5749.1" x2="519.1" y2="112.8"/>
<line x1="-259682.4" y1="5769.6" x2="522.8" y2="112.9"/>
<line x1="-253778.2" y1="5790.2" x2="526.6" y2="113.0"/>
<line x1="-247874.1" y1="5810.7" x2="530.5" y2="113.1"/>
<line x1="-241969.9" y1="5831.2" x2="534.4" y2="113.2"/>
<line x1="-236065.7" y1="5851.7" x2="538.5" y2="113.3"/>
<line x1="-230161.6" y1="5872.3" x2="542.6" y2="113.4"/>
<line x1="-224257.4" y1="5892.8" x2="546.8" y2="113.5"/>
<line x1="-218353.3" y1="5913.3" x2="551.1" y2="113.6"/>
<line x1="-212449.1" y1="5933.9" x2="555.5" y2="113.7"/>
<line x1="-206545.0" y1="5954.4" x2="559.9" y2="113.8"/>
<line x1="-200640.8" y1="5974.9" x2="564.5" y2="113.9"/>
<line x1="-194736.7" y1="5995.5" x2="569.2" y2="114.0"/>
<line x1="-188832.5" y1="6016.0" x2="574.0" y2="114.1"/>
<line x1="-182928.3" y1="6036.5" x2="578.9" y2="114.2"/>
<line x1="-177024.2" y1="6057.0" x2="583.9" y2="114.4"/>
<line x1="-171120.0" y1="6077.6" x2="589.0" y2="114.5"/>
<line x1="-165215.9" y1="6098.1" x2="594.3" y2="114.6"/>
<line x1="-159311.7" y1="6118.6" x2="599.7" y2="114.7"/>
<line x1="-153407.6" y1="6139.2" x2="605.2" y2="114.8"/>
<line x1="-147503.4" y1="6159.7" x2="610.8" y2="115.0"/>
<line x1="-141599.3" y1="6180.2" x2="616.6" y2="115.1"/>
<line x1="-135695.1" y1="6200.8" x2="622.6" y2="115.3"/>
<line x1="-129791.0" y1="6221.3" x2="628.6" y2="115.4"/>
<line x1="-123886.8" y1="6241.8" x2="634.9" y2="115.5"/>
<line x1="-117982.6" y1="6262.3" x2="641.3" y2="115.7"/>
<line x1="-112078.5" y1="6282.9" x2="647.9" y2="115.8"/>
<line x1="-106174.3" y1="6303.4" x2="654.6" y2="116.0"/>
<line x1="-100270.2" y1="6323.9" x2="661.6" y2="116.2"/>
<line x1="-94366.0" y1="6344.5" x2="668.7" y2="116.3"/>
<line x1="-88461.9" y1="6365.0" x2="676.1" y2="116.5"/>
<line x1="-82557.7" y1="6385.5" x2="683.6" y2="116.7"/>
<line x1="-76653.6" y1="6406.1" x2="691.4" y2="116.9"/>
<line x1="-70749.4" y1="6426.6" x2="699.4" y2="117.1"/>
<line x1="-64845.2" y1="6447.1" x2="707.6" y2="117.2"/>
<line x1="-58941.1" y1="6467.6" x2="716.1" y2="117.4"/>
<line x1="-53036.9" y1="6488.2" x2="724.8" y2="117.6"/>
<line x1="-47132.8" y1="6508.7" x2="733.9" y2="117.9"/>
<line x1="-41228.6" y1="6529.2" x2="743.2" y2="118.1"/>
<line x1="-35324.5" y1="6549.8" x2="752.8" y2="118.3"/>
<line x1="-29420.3" y1="6570.3" x2="762.7" y2="118.5"/>
<line x1="-23516.2" y1="6590.8" x2="773.0" y2="118.8"/>
<line x1="-17612.0" y1="6611.4" x2="783.6" y2="119.0"/>
<line x1="-11707.8" y1="6631.9" x2="794.5" y2="119.3"/>
<line x1="-5803.7" y1="6652.4" x2="805.9" y2="119.5"/>
<line x1="100.5" y1="6672.9" x2="817.6" y2="119.8"/>
<line x1="6004.6" y1="6693.5" x2="829.8" y2="120.1"/>
<line x1="11908.8" y1="6714.0" x2="842.5" y2="120.4"/>
<line x1="17812.9" y1="6734.5" x2="855.6" y2="120.7"/>
<line x1="23717.1" y1="6755.1" x2="869.2" y2="121.0"/>
<line x1="29621.2" y1="6775.6" x2="883.3" y2="121.4"/>
<line x1="35525.4" y1="6796.1" x2="898.1" y2="121.7"/>
<line x1="41429.6" y1="6816.7" x2="913.4" y2="122.1"/>
<line x1="47333.7" y1="6837.2" x2="929.3" y2="122.4"/>
<line x1="53237.9" y1="6857.7" x2="946.0" y2="122.8"/>
<line x1="59142.0" y1="6878.2" x2="963.3" y2="123.2"/>
<line x1="65046.2" y1="6898.8" x2="981.5" y2="123.7"/>
<line x1="70950.3" y1="6919.3" x2="1000.4" y2="124.1"/>
<line x1="76854.5" y1="6939.8" x2="1020.3" y2="124.6"/>
<line x1="82758.6" y1="6960.4" x2="1041.1" y2="125.1"/>
<line x1="88662.8" y1="6980.9" x2="1062.9" y2="125.6"/>
<line x1="94567.0" y1="7001.4" x2="1085.8" y2="126.1"/>
<line x1="100471.1" y1="7022.0" x2="1109.9" y2="126.7"/>
<line x1="106375.3" y1="7042.5" x2="1135.2" y2="127.3"/>
<line x1="112279.4" y1="7063.0" x2="1161.9" y2="127.9"/>
<line x1="118183.6" y1="7083.5" x2="1190.1" y2="128.5"/>
<line x1="124087.7" y1="7104.1" x2="1219.9" y2="129.2"/>
<line x1="129991.9" y1="7124.6" x2="1251.5" y2="130.0"/>
<line x1="135896.0" y1="7145.1" x2="1285.0" y2="130.8"/>
<line x1="141800.2" y1="7165.7" x2="1320.6" y2="131.6"/>
<line x1="147704.4" y1="7186.2" x2="1358.4" y2="132.5"/>
<line x1="153608.5" y1="7206.7" x2="1398.8" y2="133.4"/>
<line x1="159512.7" y1="7227.3" x2="1442.0" y2="134.4"/>
<line x1="165416.8" y1="7247.8" x2="1488.3" y2="135.5"/>
<line x1="171321.0" y1="7268.3" x2="1538.1" y2="136.7"/>
<line x1="177225.1" y1="7288.8" x2="1591.6" y2="137.9"/>
<line x1="183129.3" y1="7309.4" x2="1649.5" y2="139.3"/>
<line x1="189033.4" y1="7329.9" x2="1712.1" y2="140.8"/>
<line x1="194937.6" y1="7350.4" x2="1780.3" y2="142.4"/>
<line x1="200841.8" y1="7371.0" x2="1854.6" y2="144.1"/>
<line x1="206745.9" y1="7391.5" x2="1936.0" y2="146.0"/>
<line x1="212650.1" y1="7412.0" x2="2025.6" y2="148.1"/>
<line x1="218554.2" y1="7432.6" x2="2124.7" y2="150.4"/>
<line x1="224458.4" y1="7453.1" x2="2234.8" y2="153.0"/>
<line x1="230362.5" y1="7473.6" x2="2357.8" y2="155.9"/>
<line x1="236266.7" y1="7494.1" x2="2496.3" y2="159.1"/>
<line x1="242170.8" y1="7514.7" x2="2653.4" y2="162.8"/>
<line x1="248075.0" y1="7535.2" x2="2832.9" y2="167.0"/>
<line x1="253979.1" y1="7555.7" x2="3040.1" y2="171.8"/>
<line x1="259883.3" y1="7576.3" x2="3282.0" y2="177.5"/>
<line x1="265787.5" y1="7596.8" x2="3568.0" y2="184.2"/>
<line x1="271691.6" y1="7617.3" x2="3911.5" y2="192.2"/>
<line x1="277595.8" y1="7637.9" x2="4331.7" y2="202.1"/>
<line x1="283499.9" y1="7658.4" x2="4857.5" y2="214.4"/>
<line x1="289404.1" y1="7678.9" x2="5534.5" y2="230.2"/>
<line x1="295308.2" y1="7699.4" x2="6438.8" y2="251.4"/>
<line x1="301212.4" y1="7720.0" x2="7707.9" y2="281.1"/>
<line x1="307116.5" y1="7740.5" x2="9618.6" y2="325.8"/>
<line x1="313020.7" y1="7761.0" x2="12821.7" y2="400.8"/>
<line x1="318924.9" y1="7781.6" x2="19298.8" y2="552.3"/>
<line x1="324829.0" y1="7802.1" x2="39316.3" y2="1020.8"/>
<line x1="-2594.4" y1="154.8" x2="-299259.9" y2="5632.0"/>
<line x1="-2366.5" y1="151.6" x2="-294017.6" y2="5650.2"/>
<line x1="-2167.1" y1="148.7" x2="-288775.4" y2="5668.5"/>
<line x1="-1991.2" y1="146.2" x2="-283533.2" y2="5686.7"/>
<line x1="-1834.9" y1="144.0" x2="-278291.0" y2="5704.9"/>
<line x1="-1695.1" y1="142.1" x2="-273048.8" y2="5723.2"/>
<line x1="-1569.2" y1="140.3" x2="-267806.6" y2="5741.4"/>
<line x1="-1455.4" y1="138.7" x2="-262564.3" y2="5759.6"/>
<line x1="-1351.9" y1="137.2" x2="-257322.1" y2="5777.8"/>
<line x1="-1257.4" y1="135.9" x2="-252079.9" y2="5796.1"/>
<line x1="-1170.8" y1="134.6" x2="-246837.7" y2="5814.3"/>
<line x1="-1091.1" y1="133.5" x2="-241595.5" y2="5832.5"/>
<line x1="-1017.6" y1="132.5" x2="-236353.2" y2="5850.7"/>
<line x1="-949.5" y1="131.5" x2="-231111.0" y2="5869.0"/>
<line x1="-886.3" y1="130.6" x2="-225868.8" y2="5887.2"/>
<line x1="-827.4" y1="129.8" x2="-220626.6" y2="5905.4"/>
<line x1="-772.5" y1="129.0" x2="-215384.4" y2="5923.7"/>
<line x1="-721.1" y1="128.3" x2="-210142.1" y2="5941.9"/>
<line x1="-673.0" y1="127.6" x2="-204899.9" y2="5960.1"/>
<line x1="-627.7" y1="127.0" x2="-199657.7" y2="5978.3"/>
<line x1="-585.1" y1="126.4" x2="-194415.5" y2="5996.6"/>
<line x1="-545.0" y1="125.8" x2="-189173.3" y2="6014.8"/>
<line x1="-507.1" y1="125.2" x2="-183931.1" y2="6033.0"/>
<line x1="-471.2" y1="124.7" x2="-178688.8" y2="6051.3"/>
<line x1="-437.2" y1="124.3" x2="-173446.6" y2="6069.5"/>
<line x1="-405.0" y1="123.8" x2="-168204.4" y2="6087.7"/>
<line x1="-374.4" y1="123.4" x2="-162962.2" y2="6105.9"/>
<line x1="-345.3" y1="123.0" x2="-157720.0" y2="6124.2"/>
<line x1="-317.5" y1="122.6" x2="-152477.7" y2="6142.4"/>
<line x1="-291.1" y1="122.2" x2="-147235.5" y2="6160.6"/>
<line x1="-265.8" y1="121.8" x2="-141993.3" y2="6178.9"/>
<line x1="-241.7" y1="121.5" x2="-136751.1" y2="6197.1"/>
<line x1="-218.6" y1="121.2" x2="-131508.9" y2="6215.3"/>
<line x1="-196.5" y1="120.9" x2="-126266.6" y2="6233.5"/>
<line x1="-175.4" y1="120.6" x2="-121024.4" y2="6251.8"/>
<line x1="-155.1" y1="120.3" x2="-115782.2" y2="6270.0"/>
<line x1="-135.6" y1="120.0" x2="-110540.0" y2="6288.2"/>
<line x1="-116.9" y1="119.7" x2="-105297.8" y2="6306.5"/>
<line x1="-98.8" y1="119.5" x2="-100055.5" y2="6324.7"/>
<line x1="-81.5" y1="119.2" x2="-94813.3" y2="6342.9"/>
<line x1="-64.8" y1="119.0" x2="-89571.1" y2="6361.1"/>
<line x1="-48.8" y1="118.8" x2="-84328.9" y2="6379.4"/>
<line x1="-33.3" y1="118.5" x2="-79086.7" y2="6397.6"/>
<line x1="-18.3" y1="118.3" x2="-73844.5" y2="6415.8"/>
<line x1="-3.9" y1="118.1" x2="-68602.2" y2="6434.1"/>
<line x1="10.1" y1="117.9" x2="-63360.0" y2="6452.3"/>
<line x1="23.6" y1="117.7" x2="-58117.8" y2="6470.5"/>
<line x1="36.6" y1="117.6" x2="-52875.6" y2="6488.7"/>
<line x1="49.3" y1="117.4" x2="-47633.4" y2="6507.0"/>
<line x1="61.5" y1="117.2" x2="-42391.1" y2="6525.2"/>
<line x1="73.3" y1="117.0" x2="-37148.9" y2="6543.4"/>
<line x1="84.8" y1="116.9" x2="-31906.7" y2="6561.7"/>
<line x1="95.9" y1="116.7" x2="-26664.5" y2="6579.9"/>
<line x1="106.7" y1="116.6" x2="-21422.3" y2="6598.1"/>
<line x1="117.2" y1="116.4" x2="-16180.0" y2="6616.3"/>
<line x1="127.4" y1="116.3" x2="-10937.8" y2="6634.6"/>
<line x1="137.3" y1="116.1" x2="-5695.6" y2="6652.8"/>
<line x1="146.9" y1="116.0" x2="-453.4" y2="6671.0"/>
<line x1="156.2" y1="115.9" x2="4788.8" y2="6689.3"/>
<line x1="165.3" y1="115.7" x2="10031.1" y2="6707.5"/>
<line x1="174.1" y1="115.6" x2="15273.3" y2="6725.7"/>
<line x1="182.7" y1="115.5" x2="20515.5" y2="6743.9"/>
<line x1="191.1" y1="115.4" x2="25757.7" y2="6762.2"/>
<line x1="199.3" y1="115.3" x2="30999.9" y2="6780.4"/>
<line x1="207.2" y1="115.1" x2="36242.1" y2="6798.6"/>
<line x1="215.0" y1="115.0" x2="41484.4" y2="6816.8"/>
<line x1="222.5" y1="114.9" x2="46726.6" y2="6835.1"/>
<line x1="229.9" y1="114.8" x2="51968.8" y2="6853.3"/>
<line x1="237.1" y1="114.7" x2="57211.0" y2="6871.5"/>
<line x1="244.1" y1="114.6" x2="62453.2" y2="6889.8"/>
<line x1="250.9" y1="114.5" x2="67695.5" y2="6908.0"/>
<line x1="257.6" y1="114.4" x2="72937.7" y2="6926.2"/>
<line x1="264.2" y1="114.3" x2="78179.9" y2="6944.4"/>
<line x1="270.5" y1="114.2" x2="83422.1" y2="6962.7"/>
<line x1="276.8" y1="114.2" x2="88664.3" y2="6980.9"/>
<line x1="282.9" y1="114.1" x2="93906.6" y2="6999.1"/>
<line x1="288.8" y1="114.0" x2="99148.8" y2="7017.4"/>
<line x1="294.7" y1="113.9" x2="104391.0" y2="7035.6"/>
<line x1="300.4" y1="113.8" x2="109633.2" y2="7053.8"/>
<line x1="305.9" y1="113.7" x2="114875.4" y2="7072.0"/>
<line x1="311.4" y1="113.7" x2="120117.6" y2="7090.3"/>
<line x1="316.7" y1="113.6" x2="125359.9" y2="7108.5"/>
<line x1="322.0" y1="113.5" x2="130602.1" y2="7126.7"/>
<line x1="327.1" y1="113.4" x2="135844.3" y2="7145.0"/>
<line x1="332.1" y1="113.4" x2="141086.5" y2="7163.2"/>
<line x1="337.0" y1="113.3" x2="146328.7" y2="7181.4"/>
<line x1="341.9" y1="113.2" x2="151571.0" y2="7199.6"/>
<line x1="346.6" y1="113.2" x2="156813.2" y2="7217.9"/>
<line x1="351.2" y1="113.1" x2="162055.4" y2="7236.1"/>
<line x1="355.8" y1="113.0" x2="167297.6" y2="7254.3"/>
<line x1="360.2" y1="113.0" x2="172539.8" y2="7272.6"/>
<line x1="364.6" y1="112.9" x2="177782.1" y2="7290.8"/>
<line x1="368.9" y1="112.9" x2="183024.3" y2="7309.0"/>
<line x1="373.1" y1="112.8" x2="188266.5" y2="7327.2"/>
<line x1="377.2" y1="112.7" x2="193508.7" y2="7345.5"/>
<line x1="381.3" y1="112.7" x2="198750.9" y2="7363.7"/>
<line x1="385.3" y1="112.6" x2="203993.2" y2="7381.9"/>
<line x1="389.2" y1="112.6" x2="209235.4" y2="7400.2"/>
<line x1="393.0" y1="112.5" x2="214477.6" y2="7418.4"/>
<line x1="396.8" y1="112.5" x2="219719.8" y2="7436.6"/>
<line x1="400.5" y1="112.4" x2="224962.0" y2="7454.8"/>
<line x1="404.1" y1="112.4" x2="230204.2" y2="7473.1"/>
<line x1="407.7" y1="112.3" x2="235446.5" y2="7491.3"/>
<line x1="411.2" y1="112.3" x2="240688.7" y2="7509.5"/>
<line x1="414.7" y1="112.2" x2="245930.9" y2="7527.8"/>
<line x1="418.1" y1="112.2" x2="251173.1" y2="7546.0"/>
<line x1="421.4" y1="112.1" x2="256415.3" y2="7564.2"/>
<line x1="424.7" y1="112.1" x2="261657.6" y2="7582.4"/>
<line x1="427.9" y1="112.0" x2="266899.8" y2="7600.7"/>
<line x1="431.1" y1="112.0" x2="272142.0" y2="7618.9"/>
<line x1="434.2" y1="111.9" x2="277384.2" y2="7637.1"/>
<line x1="437.3" y1="111.9" x2="282626.4" y2="7655.4"/>
<line x1="440.4" y1="111.8" x2="287868.7" y2="7673.6"/>
<line x1="443.3" y1="111.8" x2="293110.9" y2="7691.8"/>
<line x1="446.3" y1="111.8" x2="298353.1" y2="7710.0"/>
<line x1="449.2" y1="111.7" x2="303595.3" y2="7728.3"/>
<line x1="452.0" y1="111.7" x2="308837.5" y2="7746.5"/>
<line x1="454.8" y1="111.6" x2="314079.7" y2="7764.7"/>
<line x1="457.6" y1="111.6" x2="319322.0" y2="7782.9"/>
<line x1="460.3" y1="111.6" x2="324564.2" y2="7801.2"/>
<line x1="463.0" y1="111.5" x2="329806.4" y2="7819.4"/>
</g>
<polygon points="325.8,257 399,321.3 515,262.9 427.9,225.3" fill="#6a85ae"/>
<polygon points="325.8,257 399,321.3 405.3,416 387.8,416 343.4,355.1" fill="#8f9aaa" opacity="0.8"/>
<polygon points="399,321.3 515,262.9 503,366 440,416 405.3,416" fill="#7e8590" opacity="0.8"/>
<polygon points="255.3,293.2 277,286.3 282.6,302.2 261.2,309.1" fill="#86b08a" fill-opacity="0.6" stroke="#8cf060" stroke-width="0.8"/>
<polygon points="261.2,309.1 282.6,302.2 289,312 266.2,320" fill="#6f86e0" fill-opacity="0.6" stroke="#4a6cff" stroke-width="0.8"/>
<polyline points="277,286.3 286,290 289,312" fill="none" stroke="#e04848" stroke-width="0.8"/>
<line x1="282.6" y1="302.2" x2="193.8" y2="334.9" stroke="#e04848" stroke-width="1.5"/>
<polygon points="174,345 191.8,328.9 194.8,341.8" fill="#e8201c"/>
<polygon points="191,329.5 194.8,341.8 196,336" fill="#701010"/>
<line x1="282.6" y1="302.2" x2="266.2" y2="237.7" stroke="#3f6cff" stroke-width="2"/>
<polygon points="260.6,217.5 256.5,237.5 263,239 272.1,234.8" fill="#2a55f5"/>
<polygon points="260.6,217.5 268,237 272.1,234.8" fill="#10206a"/>
<line x1="282.6" y1="302.2" x2="265.2" y2="274.4" stroke="#78f048" stroke-width="2"/>
<ellipse cx="265.6" cy="275" rx="6" ry="4.5" fill="#5ee03a"/>
<polygon points="262.6,268.5 260,272 266,271" fill="#2a6a10"/>

<!--/SCENEOBJ-->
</svg>
<!--OVL-->
<div class="a" style="left:176px;top:75px;width:43px;height:170px;background:#25292c;border-radius:5px"></div>
<div class="a" style="left:190px;top:81px;width:16px;height:1px;background:#5a5d60"></div>
<div class="a" style="left:190px;top:84px;width:16px;height:1px;background:#5a5d60"></div>
<div class="a" style="left:179px;top:92px;width:37px;height:20px;background:#5a5a5a;border-radius:4px 4px 0 0"></div>
<div class="a" style="left:179px;top:113px;width:37px;height:20px;background:#46607d"></div>
<div class="a" style="left:179px;top:134px;width:37px;height:20px;background:#5a5a5a"></div>
<div class="a" style="left:179px;top:155px;width:37px;height:20px;background:#5a5a5a"></div>
<div class="a" style="left:179px;top:176px;width:37px;height:20px;background:#5a5a5a"></div>
<div class="a" style="left:179px;top:197px;width:37px;height:20px;background:#5a5a5a;border-radius:0 0 4px 4px"></div>
<div class="a" style="left:179px;top:221px;width:37px;height:20px;background:#5a5a5a;border-radius:4px"></div>
<svg style="left:189px;top:93px" width="17" height="17" viewBox="0 0 17 17"><path d="M3.2 9.5 V4.5 Q3.2 3.3 4.3 3.3 Q5.4 3.3 5.4 4.5 V8 V2.2 Q5.4 1 6.5 1 Q7.6 1 7.6 2.2 V8 V1.6 Q7.6 0.4 8.7 0.4 Q9.8 0.4 9.8 1.6 V8 V2.6 Q9.8 1.4 10.9 1.4 Q12 1.4 12 2.6 V9.8 L13.3 7.6 Q14.2 6.4 15.2 7.1 Q15.9 7.7 15.3 8.8 L12.2 14.2 Q11 16.3 8.6 16.3 H7 Q3.2 16.3 3.2 12.5Z" fill="#d4d4d4"/></svg>
<svg style="left:189px;top:115px" width="17" height="17" viewBox="0 0 17 17"><path d="M8.5 1.5 V15.5 M1.5 8.5 H15.5" stroke="#dcdcdc" stroke-width="1.1"/><path d="M8.5 0.5 L6 3.5 H11Z M8.5 16.5 L6 13.5 H11Z M0.5 8.5 L3.5 6 V11Z M16.5 8.5 L13.5 6 V11Z" fill="none" stroke="#dcdcdc" stroke-width="1"/></svg>
<svg style="left:190px;top:136px" width="15" height="16" viewBox="0 0 15 16"><path d="M5.5 2.2 A6 6 0 0 0 5.5 13.8" fill="none" stroke="#cfcfcf" stroke-width="1.1"/><path d="M9.5 13.8 A6 6 0 0 0 9.5 2.2" fill="none" stroke="#cfcfcf" stroke-width="1.1"/><path d="M9.5 0.5 V4 H13" fill="none" stroke="#cfcfcf" stroke-width="1"/><path d="M5.5 15.5 V12 H2" fill="none" stroke="#cfcfcf" stroke-width="1"/></svg>
<svg style="left:190px;top:157px" width="15" height="16" viewBox="0 0 15 16"><rect x="0.5" y="0.5" width="14" height="14" fill="none" stroke="#cfcfcf" stroke-width="1.1"/><rect x="0.5" y="9.5" width="5" height="5" fill="none" stroke="#cfcfcf" stroke-width="1.1"/><path d="M6.5 8.5 L11.5 3.5 M8 3.5 H11.5 V7" fill="none" stroke="#cfcfcf" stroke-width="1.1"/></svg>
<svg style="left:190px;top:178px" width="15" height="15" viewBox="0 0 15 15"><rect x="0.3" y="0.3" width="3" height="3" fill="#cfcfcf"/><rect x="11.7" y="0.3" width="3" height="3" fill="#cfcfcf"/><rect x="0.3" y="11.7" width="3" height="3" fill="#cfcfcf"/><rect x="11.7" y="11.7" width="3" height="3" fill="#cfcfcf"/><path d="M1.8 4 V11 M13.2 4 V11 M4 1.8 H11 M4 13.2 H11" stroke="#cfcfcf" stroke-width="1.1"/></svg>
<svg style="left:189px;top:198px" width="16" height="16" viewBox="0 0 16 16"><circle cx="8" cy="8" r="6" fill="none" stroke="#cfcfcf" stroke-width="1" stroke-dasharray="3 1.5"/><path d="M8 3.5 V12.5 M3.5 8 H12.5" stroke="#cfcfcf" stroke-width="1.2"/><path d="M12.5 0.5 H15.5 V3.5Z M0.5 15.5 V12.5 H3.5Z" fill="#cfcfcf"/></svg>
<svg style="left:189px;top:223px" width="16" height="16" viewBox="0 0 16 16"><rect x="6" y="1" width="3.5" height="3.5" fill="none" stroke="#cfcfcf" stroke-width="1"/><rect x="1" y="11" width="3.5" height="3.5" fill="none" stroke="#cfcfcf" stroke-width="1"/><rect x="11.5" y="8.5" width="3.5" height="3.5" fill="none" stroke="#cfcfcf" stroke-width="1"/><path d="M6 4.5 L3 11 M9.5 4.5 L12 8.5" stroke="#cfcfcf" stroke-width="1"/></svg>
<div class="a" style="left:606px;top:81px;width:16px;height:1px;background:#3e3e3e"></div>
<div class="a" style="left:606px;top:84px;width:16px;height:1px;background:#3e3e3e"></div>
<svg style="left:683px;top:89px" width="9" height="10" viewBox="0 0 9 10"><path d="M2.5 4.5 V2.8 Q2.5 0.8 4.5 0.8 Q6.5 0.8 6.5 2.5" fill="none" stroke="#c8ccce" stroke-width="1.2"/><rect x="0.8" y="4.5" width="7.4" height="5" rx="0.8" fill="#c8ccce"/></svg>
<svg style="left:612px;top:84px" width="80" height="68" viewBox="612 84 80 68">
<text x="651" y="93" font-family="Liberation Sans" font-size="11" fill="#e8e8e8">y</text>
<text x="617" y="140" font-family="Liberation Sans" font-size="11" fill="#e8e8e8">x</text>
<text x="682" y="143" font-family="Liberation Sans" font-size="11" fill="#e8e8e8">z</text>
<path d="M655 126 L633 121 A6 4.6 0 0 1 641 113.6Z" fill="#d4d4d4"/>
<ellipse cx="637" cy="117.5" rx="5.5" ry="4.3" fill="#dcdcdc" transform="rotate(-20 637 117.5)"/>
<path d="M655 126 L677 121 A6 4.6 0 0 0 669 113.6Z" fill="#d4d4d4"/>
<ellipse cx="673" cy="117.5" rx="5.5" ry="4.3" fill="#dcdcdc" transform="rotate(20 673 117.5)"/>
<path d="M655 126 L650.5 146.5 A4.5 2.2 0 0 0 659.5 146.5Z" fill="#d8d8d8"/>
<ellipse cx="655" cy="146.5" rx="4.5" ry="2" fill="#c8c8c8"/>
<path d="M655 116.5 L666.5 121.5 V131.5 L655 137 L643.5 131.5 V121.5Z" fill="#d2d2d2"/>
<path d="M655 116.5 L666.5 121.5 L655 126.5 L643.5 121.5Z" fill="#c4c4c4"/>
<path d="M655 126.5 V137 L643.5 131.5 V121.5Z" fill="#dadada"/>
<path d="M648 96.5 Q655 94.5 662 96.5 L655 116Z" fill="#80d63c"/>
<path d="M647.6 127.5 L626.5 127 Q626 138 634 140.5Z" fill="#c8421f"/>
<ellipse cx="630" cy="133.5" rx="3.8" ry="6.8" fill="#b8361a" transform="rotate(20 630 133.5)" opacity=".6"/>
<path d="M661.6 128.2 L673 129 Q683 131 681 139 Q679 144 672 141Z" fill="#3f6ee0"/>
<ellipse cx="677" cy="135.5" rx="4.2" ry="6.5" fill="#4a7af0" transform="rotate(-25 677 135.5)"/>
</svg>
<svg style="left:630px;top:171px" width="10" height="9" viewBox="0 0 10 9"><path d="M10 0.5 L1 4.5 L10 8.5 M1 4.5 H9" fill="none" stroke="#d6d6d6" stroke-width="1"/></svg>
<div class="t" style="left:643px;top:168px;color:#d6d6d6;font-size:12.5px">Persp</div>

<!--/OVL-->

<!-- PROJECT -->
<div class="a tabbar" style="left:0;top:418px;width:710px;height:19px"></div>
<div class="a tab" style="left:0;top:418px;width:80px;height:19px;border-radius:0 3px 0 0"></div>
<div class="t" style="left:23px;top:420px">Project</div>
<div class="t" style="left:105px;top:420px">Console</div>
<div class="a" style="left:0;top:437px;width:710px;height:20px;background:#3c3c3c;border-bottom:1px solid #232323"></div>
<div class="a" style="left:278px;top:439px;width:318px;height:15px;background:#2a2a2a;border-radius:3px"></div>
<div class="a" style="left:0;top:457px;width:207px;height:227px;background:#383838"></div>
<div class="a" style="left:0;top:569px;width:194px;height:16px;background:#484848"></div>
<div class="a" style="left:207px;top:457px;width:1px;height:227px;background:#232323"></div>
<div class="a" style="left:208px;top:457px;width:502px;height:227px;background:#383838"></div>
<div class="a" style="left:208px;top:458px;width:502px;height:20px;background:#3e3e3e"></div>
<div class="a" style="left:208px;top:663px;width:502px;height:21px;background:#414141;border-top:1px solid #2a2a2a"></div>
<!--PROJ-->
<svg style="left:7px;top:421px;color:#c8c8c8" width="13" height="11"><use href="#folder"/></svg>
<svg style="left:89px;top:421px" width="11" height="12" viewBox="0 0 11 12"><rect x="0.6" y="0.6" width="9.8" height="10.8" rx="1" fill="#c8c8c8"/><path d="M2.5 3 H8.5 M2.5 5 H8.5 M2.5 7 H8.5 M2.5 9 H6.5" stroke="#282828" stroke-width="1"/></svg>
<svg style="left:676px;top:421px;color:#c8c8c8" width="9" height="11"><use href="#lock"/></svg>
<svg style="left:695px;top:421px;color:#c8c8c8" width="4" height="12"><use href="#kebab"/></svg>
<svg style="left:6px;top:440px" width="13" height="13" viewBox="0 0 13 13"><path d="M6.5 0.5 V12.5 M0.5 6.5 H12.5" stroke="#d8d8d8" stroke-width="2"/></svg>
<svg style="left:23px;top:444px;color:#c8c8c8" width="8" height="5"><use href="#tdown"/></svg>
<div class="a" style="left:278px;top:439px;width:318px;height:16px;background:#2a2a2a;border:1px solid #232323;border-radius:3px"></div>
<svg style="left:283px;top:443px" width="8" height="8" viewBox="0 0 8 8"><circle cx="3" cy="3" r="2.2" fill="none" stroke="#c8c8c8" stroke-width="1.1"/><path d="M4.6 4.6 L7.3 7.3" stroke="#c8c8c8" stroke-width="1.5"/></svg>
<div class="a" style="left:581px;top:439px;width:15px;height:16px;background:#303030;border-radius:0 3px 3px 0"></div>
<svg style="left:583px;top:441px" width="11" height="11" viewBox="0 0 11 11"><rect x="0.6" y="0.6" width="9.8" height="9.8" fill="none" stroke="#c8c8c8" stroke-width="1"/><path d="M3.5 7.5 L7.5 3.5 M4.5 3.5 H7.5 V6.5" fill="none" stroke="#c8c8c8" stroke-width="1"/></svg>
<div class="a" style="left:598px;top:437px;width:1px;height:20px;background:#2c2c2c"></div>
<div class="a" style="left:624px;top:437px;width:1px;height:20px;background:#2c2c2c"></div>
<div class="a" style="left:650px;top:437px;width:1px;height:20px;background:#2c2c2c"></div>
<div class="a" style="left:676px;top:437px;width:1px;height:20px;background:#2c2c2c"></div>
<svg style="left:604px;top:440px" width="14" height="14" viewBox="0 0 14 14"><rect x="3" y="0.5" width="5" height="5" fill="#c8c8c8"/><circle cx="4" cy="10" r="3.5" fill="#c8c8c8"/><path d="M9.5 4.5 L13.5 10.5 H6.5Z" fill="#c8c8c8"/></svg>
<svg style="left:631px;top:440px" width="13" height="13" viewBox="0 0 13 13"><path d="M6.5 0.5 H12.5 V6.5 L6.5 12.5 L0.5 6.5Z" fill="#c8c8c8"/><circle cx="9.5" cy="3.5" r="1.2" fill="#3c3c3c"/></svg>
<svg style="left:656px;top:440px" width="14" height="13" viewBox="0 0 14 13"><path d="M7 0.3 L8.8 4.5 L13.5 4.8 L9.8 7.8 L11 12.5 L7 9.8 L3 12.5 L4.2 7.8 L0.5 4.8 L5.2 4.5Z" fill="#8c8c8c"/></svg>
<svg style="left:681px;top:441px" width="14" height="12" viewBox="0 0 14 12"><path d="M0.8 6 Q7 -1 13.2 6 Q7 13 0.8 6Z" fill="none" stroke="#c8c8c8" stroke-width="1.1"/><path d="M1.5 11.5 L12.5 0.5" stroke="#c8c8c8" stroke-width="1.2"/></svg>
<div class="t" style="left:696px;top:439px;color:#c8c8c8;font-size:12px">7</div>

<svg style="left:4px;top:462px;color:#6e6e6e" width="9" height="8"><use href="#tdown"/></svg>
<svg style="left:18px;top:460px" width="12" height="12" viewBox="0 0 14 13"><path d="M7 0.3 L8.8 4.5 L13.5 4.8 L9.8 7.8 L11 12.5 L7 9.8 L3 12.5 L4.2 7.8 L0.5 4.8 L5.2 4.5Z" fill="#c8c8c8"/></svg>
<div class="t b" style="left:35px;top:457px;color:#d6d6d6">Favorites</div>
<svg style="left:32px;top:476px;color:#c8c8c8" width="12" height="12"><use href="#mag"/></svg>
<div class="t" style="left:48px;top:473px">All Materials</div>
<svg style="left:32px;top:492px;color:#c8c8c8" width="12" height="12"><use href="#mag"/></svg>
<div class="t" style="left:48px;top:489px">All Models</div>
<svg style="left:32px;top:508px;color:#c8c8c8" width="12" height="12"><use href="#mag"/></svg>
<div class="t" style="left:48px;top:505px">All Prefabs</div>
<svg style="left:4px;top:541px;color:#6e6e6e" width="9" height="8"><use href="#tdown"/></svg>
<svg style="left:18px;top:539px;color:#d0d0d0" width="13" height="11"><use href="#ofolder"/></svg>
<div class="t b" style="left:35px;top:536px;color:#d6d6d6">Assets</div>
<svg style="left:18px;top:557px;color:#6e6e6e" width="9" height="8"><use href="#tdown"/></svg>
<svg style="left:32px;top:555px;color:#d0d0d0" width="13" height="11"><use href="#ofolder"/></svg>
<div class="t" style="left:48px;top:552px">Flashlight</div>
<svg style="left:33px;top:572px;color:#777" width="7" height="9"><use href="#tright"/></svg>
<svg style="left:46px;top:571px;color:#d0d0d0" width="13" height="11"><use href="#folder"/></svg>
<div class="t" style="left:62px;top:568px">Flashlight_Gold</div>
<svg style="left:46px;top:587px;color:#d0d0d0" width="13" height="11"><use href="#folder"/></svg>
<div class="t" style="left:62px;top:584px">Materials</div>
<svg style="left:33px;top:604px;color:#777" width="7" height="9"><use href="#tright"/></svg>
<svg style="left:46px;top:603px;color:#d0d0d0" width="13" height="11"><use href="#folder"/></svg>
<div class="t" style="left:62px;top:600px">Misc</div>
<svg style="left:46px;top:619px;color:#d0d0d0" width="13" height="11"><use href="#folder"/></svg>
<div class="t" style="left:62px;top:616px">Model</div>
<svg style="left:46px;top:635px;color:#d0d0d0" width="13" height="11"><use href="#folder"/></svg>
<div class="t" style="left:62px;top:632px">Textures</div>
<svg style="left:19px;top:652px;color:#777" width="7" height="9"><use href="#tright"/></svg>
<svg style="left:32px;top:651px;color:#d0d0d0" width="13" height="11"><use href="#folder"/></svg>
<div class="t" style="left:48px;top:648px">Samples</div>
<svg style="left:32px;top:667px;color:#d0d0d0" width="13" height="11"><use href="#folder"/></svg>
<div class="t" style="left:48px;top:664px">Scenes</div>

<div class="a" style="left:195px;top:457px;width:12px;height:227px;background:#3a3a3a;border-left:1px solid #2e2e2e"></div>
<svg style="left:197px;top:462px;color:#d0d0d0" width="8" height="5" viewBox="0 0 8 5"><path d="M4 0 L8 5 H0Z" fill="#d0d0d0"/></svg>
<div class="a" style="left:197px;top:474px;width:9px;height:78px;background:#5a5a5a;border-radius:5px"></div>
<svg style="left:197px;top:673px" width="8" height="5" viewBox="0 0 8 5"><path d="M0 0 H8 L4 5Z" fill="#d0d0d0"/></svg>

<div class="t" style="left:212px;top:459px;color:#c0c0c0">Assets</div>
<svg style="left:254px;top:464px" width="6" height="9" viewBox="0 0 6 9"><path d="M1 0.5 L5 4.5 L1 8.5" fill="none" stroke="#a8a8a8" stroke-width="1.2"/></svg>
<div class="t" style="left:267px;top:459px;color:#c0c0c0">Flashlight</div>
<svg style="left:326px;top:464px" width="6" height="9" viewBox="0 0 6 9"><path d="M1 0.5 L5 4.5 L1 8.5" fill="none" stroke="#a8a8a8" stroke-width="1.2"/></svg>
<div class="t b" style="left:339px;top:459px;color:#d8d8d8">Flashlight_Gold</div>
<div class="a" style="left:208px;top:477px;width:502px;height:1px;background:#2e2e2e"></div>
<svg style="left:225px;top:482px;color:#d0d0d0" width="13" height="11"><use href="#folder"/></svg>
<div class="t" style="left:242px;top:479px">Materials</div>
<svg style="left:225px;top:498px;color:#d0d0d0" width="13" height="11"><use href="#folder"/></svg>
<div class="t" style="left:242px;top:495px">Scenes</div>
<svg style="left:225px;top:514px;color:#d0d0d0" width="13" height="11"><use href="#folder"/></svg>
<div class="t" style="left:242px;top:511px">Textures</div>
<svg style="left:224px;top:529px" width="14" height="14"><use href="#pcube"/></svg>
<div class="t" style="left:242px;top:527px">Flashlight</div>
<svg style="left:224px;top:545px" width="14" height="14"><use href="#pcube"/></svg>
<div class="t" style="left:242px;top:543px">FlashlightColor</div>
<div class="a" style="left:649px;top:673px;width:45px;height:2px;background:#5c5c5c"></div>
<div class="a" style="left:639px;top:669px;width:10px;height:10px;background:#a8a8a8;border-radius:50%"></div>

<!--/PROJ-->

<!-- INSPECTOR -->
<div class="a tabbar" style="left:712px;top:28px;width:442px;height:19px;border-radius:4px 4px 0 0"></div>
<div class="a tab" style="left:712px;top:28px;width:93px;height:19px;border-top:2px solid #1c80d2"></div>
<div class="t" style="left:736px;top:30px">Inspector</div>
<div class="a" style="left:712px;top:47px;width:442px;height:637px;background:#383838"></div>
<div class="a" style="left:712px;top:47px;width:2px;height:637px;background:#1c80d2"></div>
<!--INSP-->
<div class="a" style="left:0;top:0;width:1156px;height:706px;clip-path:inset(47px 2px 22px 714px)">
<div class="a" style="left:730px;top:40px;width:407px;height:15px;background:#414141;border:1px solid #262626;border-radius:0 0 4px 4px"></div>
<div class="a" style="left:1070px;top:52px;width:57px;height:23px;background:#414141;border:1px solid #262626;border-top:none;border-radius:0 0 4px 4px"></div>
<div class="a" style="left:1080px;top:63px;width:10px;height:2px;background:#e2e2e2"></div>
<div class="a" style="left:1084px;top:59px;width:2px;height:10px;background:#e2e2e2"></div>
<div class="a" style="left:1106px;top:63px;width:8px;height:2px;background:#8a8a8a"></div>
<div class="t b" style="left:746px;top:79px;color:#cfcfcf">First/Last Select</div>
<div class="a" style="left:730px;top:98px;width:407px;height:75px;background:#414141;border:1px solid #262626;border-radius:4px 4px 4px 4px"></div>
<div class="a" style="left:731px;top:99px;width:405px;height:19px;background:#353535;border-bottom:1px solid #262626;border-radius:3px 3px 0 0"></div>
<div class="t" style="left:738px;top:100px">First Select Entered (SelectEnterEventArgs)</div>
<div class="t" style="left:738px;top:137px;color:#cfcfcf">List is Empty</div>
<div class="a" style="left:1070px;top:170px;width:57px;height:23px;background:#414141;border:1px solid #262626;border-top:none;border-radius:0 0 4px 4px"></div>
<div class="a" style="left:1080px;top:181px;width:10px;height:2px;background:#e2e2e2"></div>
<div class="a" style="left:1084px;top:177px;width:2px;height:10px;background:#e2e2e2"></div>
<div class="a" style="left:1106px;top:181px;width:8px;height:2px;background:#8a8a8a"></div>
<div class="a" style="left:730px;top:195px;width:407px;height:75px;background:#414141;border:1px solid #262626;border-radius:4px 4px 4px 4px"></div>
<div class="a" style="left:731px;top:196px;width:405px;height:19px;background:#353535;border-bottom:1px solid #262626;border-radius:3px 3px 0 0"></div>
<div class="t" style="left:738px;top:197px">Last Select Exited (SelectExitEventArgs)</div>
<div class="t" style="left:738px;top:234px;color:#cfcfcf">List is Empty</div>
<div class="a" style="left:1070px;top:267px;width:57px;height:23px;background:#414141;border:1px solid #262626;border-top:none;border-radius:0 0 4px 4px"></div>
<div class="a" style="left:1080px;top:278px;width:10px;height:2px;background:#e2e2e2"></div>
<div class="a" style="left:1084px;top:274px;width:2px;height:10px;background:#e2e2e2"></div>
<div class="a" style="left:1106px;top:278px;width:8px;height:2px;background:#8a8a8a"></div>
<div class="t b" style="left:746px;top:293px;color:#cfcfcf">Select</div>
<div class="a" style="left:730px;top:312px;width:407px;height:75px;background:#414141;border:1px solid #262626;border-radius:4px 4px 4px 4px"></div>
<div class="a" style="left:731px;top:313px;width:405px;height:19px;background:#353535;border-bottom:1px solid #262626;border-radius:3px 3px 0 0"></div>
<div class="t" style="left:738px;top:314px">Select Entered (SelectEnterEventArgs)</div>
<div class="t" style="left:738px;top:351px;color:#cfcfcf">List is Empty</div>
<div class="a" style="left:1070px;top:384px;width:57px;height:23px;background:#414141;border:1px solid #262626;border-top:none;border-radius:0 0 4px 4px"></div>
<div class="a" style="left:1080px;top:395px;width:10px;height:2px;background:#e2e2e2"></div>
<div class="a" style="left:1084px;top:391px;width:2px;height:10px;background:#e2e2e2"></div>
<div class="a" style="left:1106px;top:395px;width:8px;height:2px;background:#8a8a8a"></div>
<div class="a" style="left:730px;top:409px;width:407px;height:75px;background:#414141;border:1px solid #262626;border-radius:4px 4px 4px 4px"></div>
<div class="a" style="left:731px;top:410px;width:405px;height:19px;background:#353535;border-bottom:1px solid #262626;border-radius:3px 3px 0 0"></div>
<div class="t" style="left:738px;top:411px">Select Exited (SelectExitEventArgs)</div>
<div class="t" style="left:738px;top:448px;color:#cfcfcf">List is Empty</div>
<div class="a" style="left:1070px;top:481px;width:57px;height:23px;background:#414141;border:1px solid #262626;border-top:none;border-radius:0 0 4px 4px"></div>
<div class="a" style="left:1080px;top:492px;width:10px;height:2px;background:#e2e2e2"></div>
<div class="a" style="left:1084px;top:488px;width:2px;height:10px;background:#e2e2e2"></div>
<div class="a" style="left:1106px;top:492px;width:8px;height:2px;background:#8a8a8a"></div>
<div class="t b" style="left:746px;top:507px;color:#cfcfcf">Activate</div>
<div class="a" style="left:730px;top:526px;width:407px;height:77px;background:#414141;border:1px solid #262626;border-radius:4px"></div>
<div class="a" style="left:731px;top:527px;width:405px;height:19px;background:#353535;border-bottom:1px solid #262626;border-radius:3px 3px 0 0"></div>
<div class="t" style="left:738px;top:528px">Activated (ActivateEventArgs)</div>
<div class="a" style="left:731px;top:549px;width:405px;height:50px;background:#474747"></div>
<div class="a" style="left:737px;top:558px;width:8px;height:1px;background:#6a6a6a"></div><div class="a" style="left:737px;top:561px;width:8px;height:1px;background:#6a6a6a"></div>
<div class="a" style="left:751px;top:553px;width:114px;height:18px;background:#515151;border:1px solid #2e2e2e;border-radius:3px"></div>
<div class="t" style="left:755px;top:554px;color:#d6d6d6">Runtime Only</div>
<svg style="left:850px;top:560px;color:#d0d0d0" width="8" height="5"><use href="#tdown"/></svg>
<div class="a" style="left:870px;top:553px;width:260px;height:18px;background:#515151;border:1px solid #2e2e2e;border-radius:3px"></div>
<div class="t" style="left:874px;top:554px;color:#d6d6d6">GameObject.SetActive</div>
<svg style="left:1116px;top:560px;color:#d0d0d0" width="8" height="5"><use href="#tdown"/></svg>
<div class="a" style="left:751px;top:573px;width:114px;height:18px;background:#2a2a2a;border:1px solid #212121;border-radius:3px"></div>
<div class="a" style="left:846px;top:574px;width:18px;height:16px;background:#303030;border-radius:0 2px 2px 0"></div>
<svg style="left:754px;top:576px" width="12" height="12"><use href="#pcube"/></svg>
<div class="t" style="left:767px;top:574px;color:#d6d6d6">WhiteLight</div>
<svg style="left:849px;top:576px" width="12" height="12" viewBox="0 0 12 12"><circle cx="6" cy="6" r="5" fill="none" stroke="#c8c8c8" stroke-width="1.1"/><circle cx="6" cy="6" r="2" fill="#c8c8c8"/></svg>
<div class="a" style="left:870px;top:575px;width:14px;height:14px;background:#2a2a2a;border:1px solid #3a79c0;border-radius:2px"></div>
<svg style="left:872px;top:577px" width="10" height="10" viewBox="0 0 10 10"><path d="M1.5 5 L4 7.5 L8.8 2" fill="none" stroke="#e8e8e8" stroke-width="1.5"/></svg>
<div class="a" style="left:1070px;top:599px;width:57px;height:23px;background:#414141;border:1px solid #262626;border-top:none;border-radius:0 0 4px 4px"></div>
<div class="a" style="left:1080px;top:610px;width:10px;height:2px;background:#e2e2e2"></div>
<div class="a" style="left:1084px;top:606px;width:2px;height:10px;background:#e2e2e2"></div>
<div class="a" style="left:1106px;top:610px;width:8px;height:2px;background:#e2e2e2"></div>
<div class="a" style="left:730px;top:625px;width:407px;height:75px;background:#414141;border:1px solid #262626;border-radius:4px 4px 4px 4px"></div>
<div class="a" style="left:731px;top:626px;width:405px;height:19px;background:#353535;border-bottom:1px solid #262626;border-radius:3px 3px 0 0"></div>
<div class="t" style="left:738px;top:627px">Deactivated (DeactivateEventArgs)</div>
<div class="t" style="left:738px;top:664px;color:#cfcfcf">List is Empty</div>
<div class="a" style="left:1070px;top:697px;width:57px;height:23px;background:#414141;border:1px solid #262626;border-top:none;border-radius:0 0 4px 4px"></div>
<div class="a" style="left:1080px;top:708px;width:10px;height:2px;background:#e2e2e2"></div>
<div class="a" style="left:1084px;top:704px;width:2px;height:10px;background:#e2e2e2"></div>
<div class="a" style="left:1106px;top:708px;width:8px;height:2px;background:#8a8a8a"></div>
<div class="a" style="left:1141px;top:47px;width:13px;height:637px;background:#363636;border-left:1px solid #303030"></div>
<svg style="left:1143px;top:52px" width="9" height="6" viewBox="0 0 9 6"><path d="M4.5 0 L9 6 H0Z" fill="#d0d0d0"/></svg>
<div class="a" style="left:1143px;top:395px;width:10px;height:174px;background:#5e5e5e;border-radius:5px"></div>
<svg style="left:1143px;top:673px" width="9" height="6" viewBox="0 0 9 6"><path d="M0 0 H9 L4.5 6Z" fill="#d0d0d0"/></svg>
</div>
<svg style="left:721px;top:33px" width="11" height="11" viewBox="0 0 12 12"><circle cx="6" cy="6" r="6" fill="#d0d0d0"/><rect x="5" y="5" width="2" height="4.5" fill="#3c3c3c"/><circle cx="6" cy="3.2" r="1.1" fill="#3c3c3c"/></svg>
<svg style="left:1118px;top:32px;color:#c8c8c8" width="9" height="10"><use href="#lock"/></svg>
<svg style="left:1138px;top:32px;color:#c8c8c8" width="4" height="12"><use href="#kebab"/></svg>
<!--/INSP-->

<!-- STATUS -->
<svg style="left:3px;top:688px" width="14" height="14" viewBox="0 0 14 14"><path d="M4.1 0.3 H9.9 L13.7 4.1 V9.9 L9.9 13.7 H4.1 L0.3 9.9 V4.1Z" fill="#e0403c"/><rect x="6" y="2.8" width="2" height="5.6" rx="0.8" fill="#fff"/><circle cx="7" cy="10.6" r="1.1" fill="#fff"/></svg>
<div class="t" style="left:20px;top:686px;color:#d93b3b">Win32Exception: Cannot find the specified file</div>
<!--STATUS-->
<div class="a" style="left:1049px;top:686px;width:1px;height:18px;background:#2c2c2c"></div>
<div class="a" style="left:1075px;top:686px;width:1px;height:18px;background:#2c2c2c"></div>
<div class="a" style="left:1101px;top:686px;width:1px;height:18px;background:#2c2c2c"></div>
<div class="a" style="left:1127px;top:686px;width:1px;height:18px;background:#2c2c2c"></div>
<svg style="left:1055px;top:689px" width="14" height="14" viewBox="0 0 14 14"><path d="M4 3 Q7 1 10 3 L11.5 5 V10 Q11 13.5 7 13.5 Q3 13.5 2.5 10 V5Z" fill="#c8c8c8"/><path d="M2.5 6 L0.5 5 M2.5 9 L0.3 10 M11.5 6 L13.5 5 M11.5 9 L13.7 10 M4.5 2.5 L3.5 0.5 M9.5 2.5 L10.5 0.5" stroke="#c8c8c8" stroke-width="1.2"/><path d="M0.5 0.5 L13.5 13.5" stroke="#191919" stroke-width="2.2"/><path d="M0.8 0.8 L13.2 13.2" stroke="#c8c8c8" stroke-width="1"/></svg>
<svg style="left:1081px;top:689px" width="14" height="14" viewBox="0 0 14 14"><ellipse cx="7" cy="3" rx="6" ry="2.6" fill="#c8c8c8"/><path d="M1 5 Q7 8.5 13 5 V7.5 Q7 11 1 7.5Z M1 9.5 Q7 13 13 9.5 V11 Q7 14.5 1 11Z" fill="#c8c8c8"/><path d="M0.5 0.5 L13.5 13.5" stroke="#191919" stroke-width="2.2"/><path d="M0.8 0.8 L13.2 13.2" stroke="#c8c8c8" stroke-width="1"/></svg>
<svg style="left:1107px;top:689px" width="14" height="14" viewBox="0 0 14 14"><path d="M2 4.5 A6 6 0 0 1 12 4.5 M12 9.5 A6 6 0 0 1 2 9.5" fill="none" stroke="#c8c8c8" stroke-width="1.3"/><path d="M7 2.8 Q10 2.8 10 6 Q10 7.8 8.5 9 V10.5 H5.5 V9 Q4 7.8 4 6 Q4 2.8 7 2.8Z" fill="#c8c8c8"/><path d="M0.5 0.5 L13.5 13.5" stroke="#191919" stroke-width="2.2"/><path d="M0.8 0.8 L13.2 13.2" stroke="#c8c8c8" stroke-width="1"/></svg>
<svg style="left:1133px;top:689px" width="14" height="14" viewBox="0 0 14 14"><circle cx="7" cy="7" r="6.3" fill="none" stroke="#c8c8c8" stroke-width="1.1"/><path d="M4.2 7.2 L6.2 9.2 L10 5.2" fill="none" stroke="#c8c8c8" stroke-width="1.5"/></svg>

<!--/STATUS-->
<div class="a" style="left:1154px;top:0;width:2px;height:706px;background:linear-gradient(#1c2330,#2c3a50 40%,#4a5a72 80%,#64748a)"></div>
<!--ARROW-->
<svg style="left:0;top:0" width="1156" height="706" viewBox="0 0 1156 706"><line x1="154" y1="122.5" x2="736" y2="564.6" stroke="#ff0000" stroke-width="4.4"/><polygon points="755.5,579 739.7,556.3 728.9,570.4" fill="#ff0000"/></svg>

<!--/ARROW-->

</body></html>
